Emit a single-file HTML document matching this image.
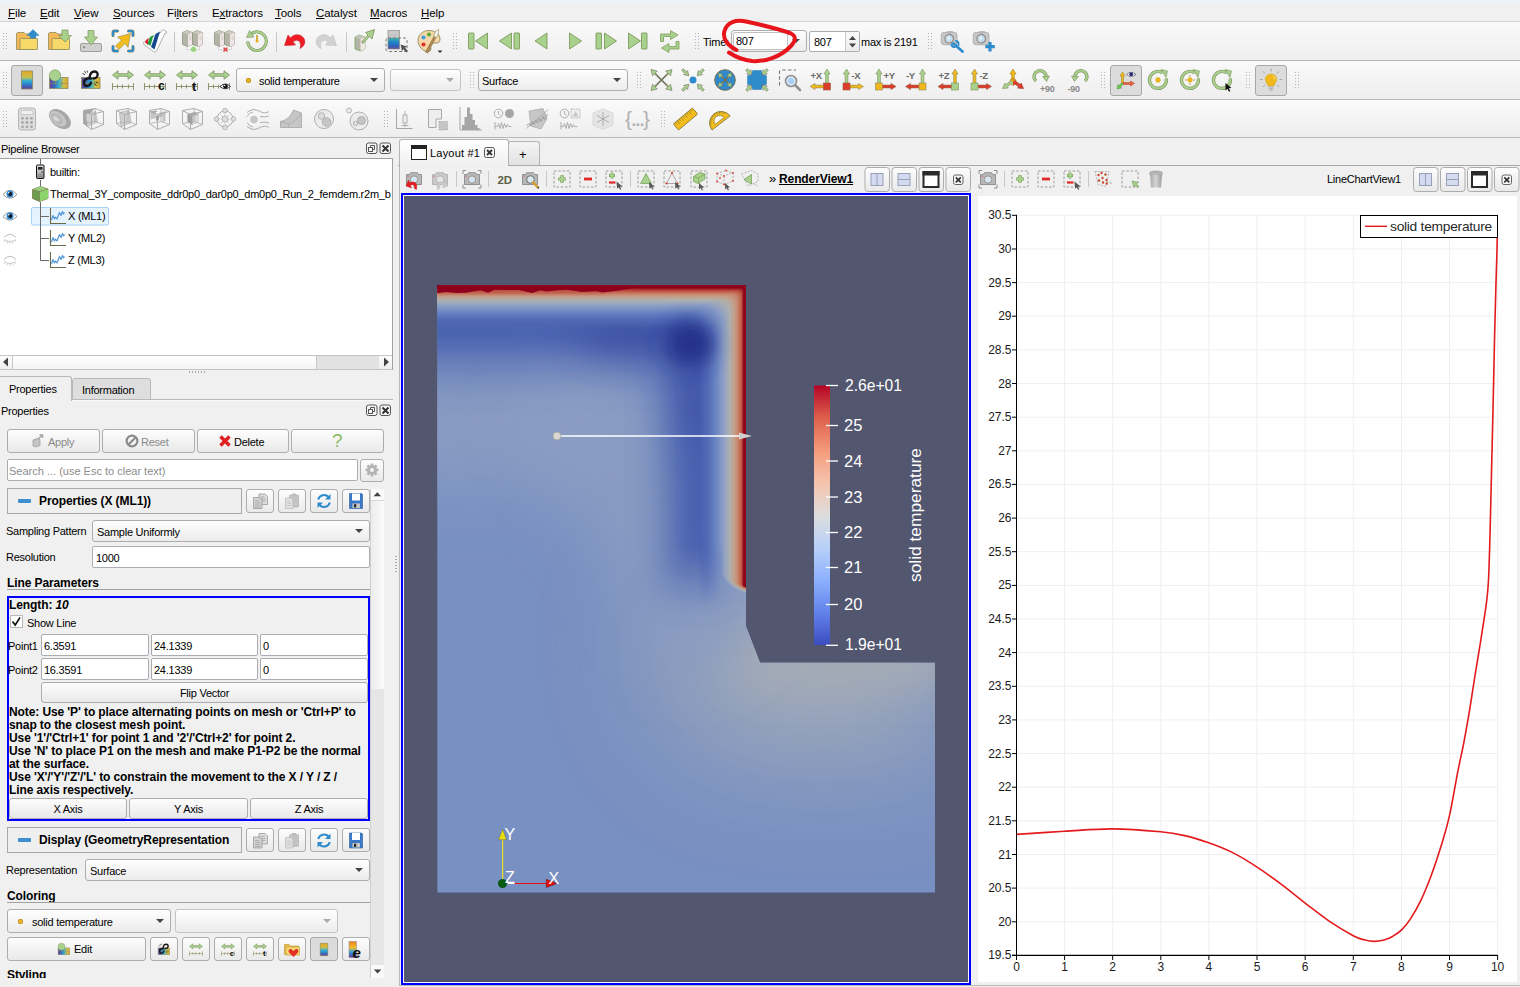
<!DOCTYPE html>
<html><head><meta charset="utf-8"><title>ParaView</title>
<style>
*{box-sizing:border-box;margin:0;padding:0}
html,body{width:1520px;height:987px;overflow:hidden;background:#f0f0f0}
body{position:relative;font-family:"Liberation Sans",sans-serif;font-size:11px;letter-spacing:-0.25px;color:#000}
.a{position:absolute;white-space:nowrap}
.t{position:absolute;white-space:nowrap;line-height:13px;height:13px}
.b{font-weight:bold}
.tb{position:absolute;left:0;width:1520px;background:linear-gradient(#fafafa,#eeeeee);border-bottom:1px solid #b8b8b8}
.hd{position:absolute;margin-left:-1px;width:6px;height:18px;background-image:radial-gradient(circle,#b4b4b4 0.6px,transparent 0.9px);background-size:3px 3px;}
.btn{position:absolute;border:1px solid #adadad;border-radius:3px;background:linear-gradient(#fdfdfd,#e9e9e9);text-align:center}
.btnp{position:absolute;border:1px solid #a8a8a8;border-radius:3px;background:#dcdcdc}
.inp{position:absolute;border:1px solid #abadb3;border-radius:2px;background:#fff;padding-left:3px}
.cmb{position:absolute;border:1px solid #adadad;border-radius:3px;background:linear-gradient(#fefefe,#ececec);padding-left:4px}
.cmb:after{content:"";position:absolute;right:6px;top:50%;margin-top:-2px;border:4px solid transparent;border-top:4px solid #444;border-bottom:none}
.cmb.dis:after{border-top-color:#aaa}
.ic{position:absolute;width:24px;height:24px;overflow:visible}
svg{overflow:visible}
</style></head><body>
<!-- top strip + menubar -->
<div class="a" style="left:0;top:0;width:1520px;height:4px;background:linear-gradient(#eef3f8 75%,#eff1f3)"></div>
<div class="a" style="left:0;top:4px;width:1520px;height:18px;background:#f0f0f0;border-bottom:1px solid #d4d4d4"></div>
<div class="t" style="left:8px;top:7px;font-size:11.5px;letter-spacing:-0.1px"><u>F</u>ile</div>
<div class="t" style="left:40px;top:7px;font-size:11.5px;letter-spacing:-0.1px"><u>E</u>dit</div>
<div class="t" style="left:74px;top:7px;font-size:11.5px;letter-spacing:-0.1px"><u>V</u>iew</div>
<div class="t" style="left:113px;top:7px;font-size:11.5px;letter-spacing:-0.1px"><u>S</u>ources</div>
<div class="t" style="left:167px;top:7px;font-size:11.5px;letter-spacing:-0.1px">Fi<u>l</u>ters</div>
<div class="t" style="left:212px;top:7px;font-size:11.5px;letter-spacing:-0.1px">E<u>x</u>tractors</div>
<div class="t" style="left:275px;top:7px;font-size:11.5px;letter-spacing:-0.1px"><u>T</u>ools</div>
<div class="t" style="left:316px;top:7px;font-size:11.5px;letter-spacing:-0.1px"><u>C</u>atalyst</div>
<div class="t" style="left:370px;top:7px;font-size:11.5px;letter-spacing:-0.1px"><u>M</u>acros</div>
<div class="t" style="left:421px;top:7px;font-size:11.5px;letter-spacing:-0.1px"><u>H</u>elp</div>
<!-- toolbars -->
<div class="tb" style="top:22px;height:39px"></div>
<div class="tb" style="top:61px;height:39px"></div>
<div class="tb" style="top:100px;height:38px"></div>
<!-- toolbar handles -->
<div class="hd" style="left:3px;top:32px"></div><div class="hd" style="left:453px;top:32px"></div><div class="hd" style="left:695px;top:32px"></div><div class="hd" style="left:928px;top:32px"></div>
<div class="hd" style="left:3px;top:71px"></div><div class="hd" style="left:470px;top:71px"></div><div class="hd" style="left:637px;top:71px"></div><div class="hd" style="left:1101px;top:71px"></div><div class="hd" style="left:1246px;top:71px"></div><div class="hd" style="left:1295px;top:71px"></div>
<div class="hd" style="left:3px;top:110px"></div><div class="hd" style="left:384px;top:110px"></div><div class="hd" style="left:661px;top:110px"></div>
<!-- separators -->
<div class="a" style="left:174px;top:32px;width:1px;height:20px;background:#c8c8c8"></div>
<div class="a" style="left:276px;top:32px;width:1px;height:20px;background:#c8c8c8"></div>
<div class="a" style="left:346px;top:32px;width:1px;height:20px;background:#c8c8c8"></div>
<!-- pressed buttons -->
<div class="btnp" style="left:11px;top:65px;width:32px;height:31px"></div>
<div class="btnp" style="left:1110px;top:65px;width:32px;height:31px"></div>
<div class="btnp" style="left:1255px;top:65px;width:32px;height:31px"></div>
<!-- time controls -->
<div class="t" style="left:703px;top:36px">Time:</div>
<div class="cmb" style="left:731px;top:30px;width:76px;height:22px;padding:0"><div class="a" style="left:1px;top:1px;width:55px;height:18px;background:#fff;border:1px solid #c0c0c0;border-radius:2px;line-height:16px;padding-left:2px">807</div></div>
<div class="inp" style="left:809px;top:31px;width:51px;height:21px;line-height:20px;padding-left:4px">807</div>
<div class="a" style="left:845px;top:32px;width:14px;height:19px;border-left:1px solid #c8c8c8;background:linear-gradient(#fafafa,#ececec)"></div>
<svg class="a" style="left:846px;top:32px" width="13" height="19"><path d="M3 8l3.500-4 3.500 4zM3 11.500l3.500 4 3.500-4z" fill="#444"/></svg>
<div class="t" style="left:861px;top:36px">max is 2191</div>
<!-- row2 combos -->
<div class="cmb" style="left:236px;top:68px;width:149px;height:24px;line-height:24px;padding-left:22px">solid temperature</div>
<div class="a" style="left:246px;top:78px;width:5px;height:5px;border-radius:1.5px;background:#f0b428;border:1px solid #c08a18"></div>
<div class="cmb dis" style="left:390px;top:69px;width:71px;height:22px;border-color:#c4c4c4"></div>
<div class="cmb" style="left:478px;top:69px;width:150px;height:22px;line-height:22px;padding-left:3px">Surface</div>
<svg class="a" style="left:0;top:0" width="1520" height="140" viewBox="0 0 1520 140">
<g transform="translate(27,41)"><path d="M-10.500 8.500v-16l1-1h6.500l1.500 1.500h8l0.500 0.500v15z" fill="#f4b955" stroke="#8f8a5a" stroke-width="0.800" stroke-linejoin="round"/><rect x="-7" y="-2.500" width="17.500" height="11" rx="0.500" fill="#f6d968" stroke="#8f8a5a" stroke-width="0.800"/><path d="M6 -11.500l6 6h-3.200v2.500h-5.600v-2.500h-3.200z" fill="#2e8ccc" stroke="#2277b0" stroke-width="0.400"/></g>
<g transform="translate(59,41)"><path d="M-10.500 8.500v-16l1-1h6.500l1.500 1.500h8l0.500 0.500v15z" fill="#f4b955" stroke="#8f8a5a" stroke-width="0.800" stroke-linejoin="round"/><rect x="-7" y="-2.500" width="17.500" height="11" rx="0.500" fill="#f6d968" stroke="#8f8a5a" stroke-width="0.800"/><path d="M3 -11h6v5.500h3.500l-6.500 6.500-6.500-6.500h3.500z" fill="#a9d18e" stroke="#7c8f5c" stroke-width="0.700" stroke-linejoin="round"/></g>
<g transform="translate(91,41)"><rect x="-10.500" y="2.500" width="21" height="8" rx="1.500" fill="#cfd0cf" stroke="#8e8e86" stroke-width="0.800"/><circle cx="-7" cy="6.200" r="1.100" fill="#8e8e86"/><path d="M-3 -10.500h6v6.500h3.500l-6.500 8-6.500-8h3.500z" fill="#a9d18e" stroke="#7c8f5c" stroke-width="0.700" stroke-linejoin="round"/></g>
<g transform="translate(123,41)"><path d="M-10 -5.5V-8.5Q-10 -10 -8.5 -10H-5.5" fill="none" stroke="#8f8a5a" stroke-width="3" stroke-linecap="round"/><path d="M-10 -5.5V-8.5Q-10 -10 -8.5 -10H-5.5" fill="none" stroke="#2e8ccc" stroke-width="2" stroke-linecap="round"/><path d="M-10 5.5V8.5Q-10 10 -8.5 10H-5.5" fill="none" stroke="#8f8a5a" stroke-width="3" stroke-linecap="round"/><path d="M-10 5.5V8.5Q-10 10 -8.5 10H-5.5" fill="none" stroke="#2e8ccc" stroke-width="2" stroke-linecap="round"/><path d="M10 -5.5V-8.5Q10 -10 8.5 -10H5.5" fill="none" stroke="#8f8a5a" stroke-width="3" stroke-linecap="round"/><path d="M10 -5.5V-8.5Q10 -10 8.5 -10H5.5" fill="none" stroke="#2e8ccc" stroke-width="2" stroke-linecap="round"/><path d="M10 5.5V8.5Q10 10 8.5 10H5.5" fill="none" stroke="#8f8a5a" stroke-width="3" stroke-linecap="round"/><path d="M10 5.5V8.5Q10 10 8.5 10H5.5" fill="none" stroke="#2e8ccc" stroke-width="2" stroke-linecap="round"/><path d="M7.500 -7.500l-13 3.500 4 3-6 6 3.500 3.500 6-6 3 4z" fill="#f2bc1c" stroke="#8f8a5a" stroke-width="0.600" stroke-linejoin="round"/></g>
<g transform="translate(155,41)"><path d="M8 -11.500l4 2.500-1 1.500-1-0.500-8.500 18q-1 2-3 0.500l-9.500-7q-1.500-1.500 0.500-3l17-9.500-0.500-0.500z" fill="#fff" stroke="#b0b0b0" stroke-width="1" stroke-linejoin="round"/><path d="M-10 1.500q0.500-3 3.500-4.500l-0.500 7z" fill="#e02030"/><path d="M-5 -4l3.500-2-3 11-3-2.200z" fill="#1f9a3c"/><path d="M0.500 -7l4.500-2.500-5.500 18-3.500-2.600z" fill="#14478f"/></g>
<g transform="translate(193,41)"><path d="M-6.500 5v3.500h13v-3.500" fill="#fff" stroke="#d0d0d0" stroke-width="0.900"/><path d="M-10.5 3.5v-12l4.500-2 5.500 2v12l-4.500 2z" fill="#b4b4a6" stroke="#8a8a7c" stroke-width="0.700" stroke-linejoin="round"/><path d="M-5.0 -6.5l4.500-2v12l-4.500 2z" fill="#f0e6e6"/><path d="M-10.5 -8.5l4.500-2 5.500 2-4.500 2z" fill="#c8c8bc"/><path d="M-3.5 -4h1.800M-3.5 -2h1.800" stroke="#aaa" stroke-width="0.600"/><path d="M-0.5 3.5v-12l4.500-2 5.500 2v12l-4.500 2z" fill="#b4b4a6" stroke="#8a8a7c" stroke-width="0.700" stroke-linejoin="round"/><path d="M5.0 -6.5l4.500-2v12l-4.500 2z" fill="#f0e6e6"/><path d="M-0.5 -8.5l4.500-2 5.500 2-4.500 2z" fill="#c8c8bc"/><path d="M6.5 -4h1.800M6.5 -2h1.800" stroke="#aaa" stroke-width="0.600"/><circle cx="0.500" cy="8.300" r="2.700" fill="#9ed47e"/></g>
<g transform="translate(225,41)"><path d="M-6.500 5v3.500h13v-3.500" fill="#fff" stroke="#d0d0d0" stroke-width="0.900"/><path d="M-10.5 3.5v-12l4.500-2 5.500 2v12l-4.500 2z" fill="#b4b4a6" stroke="#8a8a7c" stroke-width="0.700" stroke-linejoin="round"/><path d="M-5.0 -6.5l4.500-2v12l-4.500 2z" fill="#f0e6e6"/><path d="M-10.5 -8.5l4.500-2 5.500 2-4.500 2z" fill="#c8c8bc"/><path d="M-3.5 -4h1.800M-3.5 -2h1.800" stroke="#aaa" stroke-width="0.600"/><path d="M-0.5 3.5v-12l4.500-2 5.500 2v12l-4.500 2z" fill="#b4b4a6" stroke="#8a8a7c" stroke-width="0.700" stroke-linejoin="round"/><path d="M5.0 -6.5l4.500-2v12l-4.500 2z" fill="#f0e6e6"/><path d="M-0.5 -8.5l4.500-2 5.500 2-4.500 2z" fill="#c8c8bc"/><path d="M6.5 -4h1.800M6.5 -2h1.800" stroke="#aaa" stroke-width="0.600"/><path d="M-1.500 6.500l4 4M2.500 6.500l-4 4" stroke="#e04848" stroke-width="1.700"/></g>
<g transform="translate(257,41)"><path d="M-6.500 -6.500A9.300 9.300 0 1 1 -9.300 0.500" fill="none" stroke="#7c8f5c" stroke-width="3"/><path d="M-6.500 -6.500A9.300 9.300 0 1 1 -9.300 0.500" fill="none" stroke="#a9d18e" stroke-width="1.900"/><path d="M-10.500 -3.500l7.500-0.500-4.500-6.500z" fill="#a9d18e" stroke="#7c8f5c" stroke-width="0.600" stroke-linejoin="round"/><path d="M0 -6v5.500" stroke="#c89a1c" stroke-width="1.600"/><circle cx="0" cy="0" r="1.500" fill="#e8b020"/></g>
<g transform="translate(294,41)"><g transform=""><path d="M-9.500 4.500l3.500-10.500 2.500 3c3.500-4.500 10.500-4.500 13.500 0.500c2 4 0 8-4 10c1.500-4.500 0-7.500-2.500-8c-1.500-0.500-3.500 0.500-4.500 1.500l2.500 3z" fill="#ee1c24" stroke="#c01018" stroke-width="0.500" stroke-linejoin="round"/></g></g>
<g transform="translate(327,41)"><g transform="scale(-1,1)"><path d="M-9.500 4.500l3.500-10.500 2.500 3c3.500-4.500 10.500-4.500 13.500 0.500c2 4 0 8-4 10c1.500-4.500 0-7.500-2.500-8c-1.500-0.500-3.500 0.500-4.500 1.500l2.500 3z" fill="#d2d2d2" stroke="#b8b8b8" stroke-width="0.500" stroke-linejoin="round"/></g></g>
<g transform="translate(364,41)"><path d="M-9 8.0v-12l4.500-2 5.500 2v12l-4.500 2z" fill="#b4b4a6" stroke="#6fa050" stroke-width="0.700" stroke-linejoin="round"/><path d="M-3.5 -2.0l4.500-2v12l-4.500 2z" fill="#f0e6e6"/><path d="M-9 -4.0l4.500-2 5.500 2-4.500 2z" fill="#c8c8bc"/><path d="M-2 0.5h1.800M-2 2.5h1.800" stroke="#aaa" stroke-width="0.600"/><path d="M-2.500 1l6.500-7-2.500-2.500 9-3-2.500 9.500-2.500-2.500-6 6.500z" fill="#a9d18e" stroke="#7c8f5c" stroke-width="0.800" stroke-linejoin="round"/></g>
<g transform="translate(396,41)"><defs><linearGradient id="gbl" x1="0" y1="0" x2="0" y2="1"><stop offset="0" stop-color="#cccccc"/><stop offset="0.380" stop-color="#c4c4c4"/><stop offset="0.420" stop-color="#38b0b0"/><stop offset="0.650" stop-color="#2080c8"/><stop offset="0.850" stop-color="#3060b8"/><stop offset="1" stop-color="#7050a0"/></linearGradient></defs><rect x="-8" y="-10.500" width="11.500" height="18.500" fill="url(#gbl)" stroke="#8a8a80" stroke-width="0.700"/><rect x="-10" y="-3" width="21" height="13.500" rx="2" fill="none" stroke="#777" stroke-width="1" stroke-dasharray="3 2"/><path d="M4.500 3.500l6.500 2-2 1.200 3 3.300-1.500 1.500-3.200-3.200-1.300 2z" fill="#555"/></g>
<g transform="translate(429,41)"><path d="M0 -10.500c-6.500 0-11 4.500-11 10s4.500 11 10 11c2 0 3-1 3-2.500c0-1.500-1-2-1-3.500c0-1.500 1.500-2.500 3.500-2.500h3c2.500 0 3.500-1.500 3.500-4c0-5-5-8.500-11-8.500z" fill="#f6d8a8" stroke="#8f8a5a" stroke-width="0.900"/><circle cx="-5.500" cy="-3.500" r="2.100" fill="#3aa0e0"/><circle cx="0" cy="-6.500" r="2" fill="#58a838"/><circle cx="-5.500" cy="3.500" r="2.100" fill="#e03028"/><path d="M-3.500 11l9-16.500 1.800 1-8.500 16.500z" fill="#b98850" stroke="#7a6840" stroke-width="0.600"/><path d="M5 -4.500c0-3 2-6 4.500-7c0.500 2.500-0.500 6-2.500 8.200z" fill="#fafafa" stroke="#8f8a5a" stroke-width="0.700"/><path d="M8.500 9.500h5l-2.500 2.500z" fill="#333"/></g>
<g transform="translate(478,41)"><rect x="-9.5" y="-8" width="5.500" height="16" rx="0.600" fill="#a9d18e" stroke="#7f9a5c" stroke-width="0.900"/><path d="M9.5 -8l-12 8 12 8z" fill="#a9d18e" stroke="#7f9a5c" stroke-width="0.900" stroke-linejoin="round"/></g>
<g transform="translate(510,41)"><path d="M1.5 -8l-12 8 12 8z" fill="#a9d18e" stroke="#7f9a5c" stroke-width="0.900" stroke-linejoin="round"/><rect x="4" y="-8" width="5.500" height="16" rx="0.600" fill="#a9d18e" stroke="#7f9a5c" stroke-width="0.900"/></g>
<g transform="translate(542,41)"><path d="M5 -8l-12 8 12 8z" fill="#a9d18e" stroke="#7f9a5c" stroke-width="0.900" stroke-linejoin="round"/></g>
<g transform="translate(574,41)"><path d="M-4.5 -8l12 8-12 8z" fill="#a9d18e" stroke="#7f9a5c" stroke-width="0.900" stroke-linejoin="round"/></g>
<g transform="translate(606,41)"><rect x="-10" y="-8" width="5.500" height="16" rx="0.600" fill="#a9d18e" stroke="#7f9a5c" stroke-width="0.900"/><path d="M-1.5 -8l12 8-12 8z" fill="#a9d18e" stroke="#7f9a5c" stroke-width="0.900" stroke-linejoin="round"/></g>
<g transform="translate(638,41)"><path d="M-9.5 -8l12 8-12 8z" fill="#a9d18e" stroke="#7f9a5c" stroke-width="0.900" stroke-linejoin="round"/><rect x="3.5" y="-8" width="5.500" height="16" rx="0.600" fill="#a9d18e" stroke="#7f9a5c" stroke-width="0.900"/></g>
<g transform="translate(670,41)"><path d="M-9.500 0.500v-7.500h10v-3.500l7.500 4.500-7.500 4.500v-3h-7v5z" fill="#a9d18e" stroke="#7f9a5c" stroke-width="0.800" stroke-linejoin="round"/><path d="M9 0.500v7.500h-10v3.500l-7.500-4.500 7.500-4.500v3h7v-5z" fill="#a9d18e" stroke="#7f9a5c" stroke-width="0.800" stroke-linejoin="round"/></g>
<g transform="translate(952,41)"><path d="M-5.500 -8.500l0.800-1.200h5.400l0.800 1.200z" fill="#a8a8a8"/><rect x="-10.700" y="-8.600" width="15.700" height="12.400" rx="2.600" fill="#c8c8c8" stroke="#a4a4a4" stroke-width="0.800"/><circle cx="-2.800" cy="-2.300" r="4.300" fill="#d8d8d8" stroke="#8c8c8c" stroke-width="1.200"/><circle cx="-2.800" cy="-2.300" r="2.700" fill="#bfe0f8"/><circle cx="-3.300" cy="-2.800" r="1.300" fill="#e8f4fc"/><path d="M1.500 2.500l9 8" stroke="#2e8ccc" stroke-width="2.800" stroke-linecap="round"/><path d="M-0.500 3.500q0.500 3 3.500 2.500M4 0q3 0.500 2.500 4" fill="none" stroke="#2e8ccc" stroke-width="1.800" stroke-linecap="round"/></g>
<g transform="translate(984,41)"><path d="M-5.500 -8.500l0.800-1.200h5.400l0.800 1.200z" fill="#a8a8a8"/><rect x="-10.700" y="-8.600" width="15.700" height="12.400" rx="2.600" fill="#c8c8c8" stroke="#a4a4a4" stroke-width="0.800"/><circle cx="-2.800" cy="-2.300" r="4.300" fill="#d8d8d8" stroke="#8c8c8c" stroke-width="1.200"/><circle cx="-2.800" cy="-2.300" r="2.700" fill="#bfe0f8"/><circle cx="-3.300" cy="-2.800" r="1.300" fill="#e8f4fc"/><path d="M6 1v9.500M1.300 5.700h9.500" stroke="#2e8ccc" stroke-width="3.200"/></g>
<g transform="translate(27,80)"><defs><linearGradient id="gvir" x1="0" y1="0" x2="0" y2="1"><stop offset="0" stop-color="#e6a820"/><stop offset="0.350" stop-color="#c8c050"/><stop offset="0.550" stop-color="#30b0d8"/><stop offset="0.800" stop-color="#3070c0"/><stop offset="1" stop-color="#6a3c98"/></linearGradient><linearGradient id="ghor" x1="0" y1="0" x2="1" y2="0"><stop offset="0" stop-color="#6a3c98"/><stop offset="0.300" stop-color="#3070c0"/><stop offset="0.500" stop-color="#30b0d8"/><stop offset="0.750" stop-color="#c8c050"/><stop offset="1" stop-color="#e6a820"/></linearGradient><linearGradient id="ghv" x1="0" y1="0" x2="1" y2="1"><stop offset="0" stop-color="#7a58a8"/><stop offset="0.350" stop-color="#3078c0"/><stop offset="0.550" stop-color="#38b0c8"/><stop offset="0.800" stop-color="#d8b838"/><stop offset="1" stop-color="#e6a020"/></linearGradient></defs><rect x="-5.500" y="-9" width="11" height="18" fill="url(#gvir)" stroke="#8a8a62" stroke-width="0.8"/></g>
<g transform="translate(59,80)"><rect x="-9.500" y="-2.500" width="18.500" height="11" fill="url(#ghor)" stroke="#8a8a62" stroke-width="0.800"/><path d="M-9.500 3.500h18.500M-3.500 1v4.500M3 1v4.500" stroke="#8a8a62" stroke-width="0.700" fill="none" opacity="0.800"/><circle cx="-4" cy="-4.500" r="5.700" fill="#a9d18e" stroke="#7c8f5c" stroke-width="0.600"/></g>
<g transform="translate(91,80)"><rect x="-9.500" y="-2.500" width="18.500" height="11" fill="url(#ghor)" stroke="#8a8a62" stroke-width="0.800"/><path d="M-9.500 3.500h18.500M-3.500 1v4.500M3 1v4.500" stroke="#8a8a62" stroke-width="0.700" fill="none" opacity="0.800"/><path d="M-1.500 -2.500c0.500-3.500 2-6 5-6s3.500 2.500 3 4-2 3-4 3" fill="none" stroke="#151515" stroke-width="2.300" stroke-linecap="round"/><path d="M0 -1.500c-3.500-0.500-6.500 0.500-7 3.500s1.500 4 3 4 3.500-1.500 4-3.500" fill="none" stroke="#151515" stroke-width="2.300" stroke-linecap="round"/><path d="M-8.500 -6.500l2.500 1.200M-6.500 -9l1.300 2.300M-4 -9.500l0.500 2M4.500 2l2.500 0.500M3.500 4l2 1.500" stroke="#151515" stroke-width="0.800"/></g>
<g transform="translate(123,80)"><path d="M-10.500 -5l5.500-4.200v2.900h10v-2.900l5.500 4.200-5.500 4.200v-2.900h-10v2.900z" fill="#a9d18e" stroke="#7c8f5c" stroke-width="0.800" stroke-linejoin="round"/><path d="M-10.500 6.500h21M-10.500 3v7M-5.500 4.500v4M-0.500 4.500v4M5.500 4.500v4M10.500 3v7" fill="none" stroke="#8a8a62" stroke-width="0.900"/></g>
<g transform="translate(155,80)"><path d="M-10.500 -5l5.500-4.200v2.900h10v-2.900l5.500 4.200-5.500 4.200v-2.900h-10v2.900z" fill="#a9d18e" stroke="#7c8f5c" stroke-width="0.800" stroke-linejoin="round"/><path d="M-10.500 6.500h21M-10.500 3v7M-5.500 4.500v4M-0.500 4.500v4M5.500 4.500v4M10.500 3v7" fill="none" stroke="#8a8a62" stroke-width="0.900"/><text x="3" y="10" font-family="Liberation Sans,sans-serif" font-weight="bold" font-size="12px" fill="#111">c</text></g>
<g transform="translate(187,80)"><path d="M-10.500 -5l5.500-4.200v2.900h10v-2.900l5.500 4.200-5.500 4.200v-2.900h-10v2.900z" fill="#a9d18e" stroke="#7c8f5c" stroke-width="0.800" stroke-linejoin="round"/><path d="M-10.500 6.500h21M-10.500 3v7M-5.500 4.500v4M-0.500 4.500v4M5.500 4.500v4M10.500 3v7" fill="none" stroke="#8a8a62" stroke-width="0.900"/><text x="5" y="10.500" font-family="Liberation Sans,sans-serif" font-weight="bold" font-size="13px" fill="#111">t</text></g>
<g transform="translate(219,80)"><path d="M-10.500 -5l5.500-4.200v2.900h10v-2.900l5.500 4.200-5.500 4.200v-2.900h-10v2.900z" fill="#a9d18e" stroke="#7c8f5c" stroke-width="0.800" stroke-linejoin="round"/><path d="M-10.500 6.500h21M-10.500 3v7M-5.500 4.500v4M-0.500 4.500v4M5.500 4.500v4M10.500 3v7" fill="none" stroke="#8a8a62" stroke-width="0.900"/><path d="M1 6.500q5-5 10.500 0q-5.500 4.500-10.500 0z" fill="#fff" stroke="#222" stroke-width="0.900"/><circle cx="6.500" cy="6.300" r="2.300" fill="#111"/><circle cx="5.700" cy="5.500" r="0.700" fill="#fff"/></g>
<g transform="translate(661.5,80)"><path d="M-7 -7l14 14M7 -7l-14 14" stroke="#6e6e58" stroke-width="1.700"/><path d="M-4.1 -4.9L-6.2 -7.0L-4.2 -9.0L-10.5 -10.5L-9.0 -4.2L-7.0 -6.2L-4.9 -4.1z" fill="#a9d18e" stroke="#6e6e58" stroke-width="0.600" stroke-linejoin="round"/><path d="M-4.9 4.1L-7.0 6.2L-9.0 4.2L-10.5 10.5L-4.2 9.0L-6.2 7.0L-4.1 4.9z" fill="#a9d18e" stroke="#6e6e58" stroke-width="0.600" stroke-linejoin="round"/><path d="M4.9 -4.1L7.0 -6.2L9.0 -4.2L10.5 -10.5L4.2 -9.0L6.2 -7.0L4.1 -4.9z" fill="#a9d18e" stroke="#6e6e58" stroke-width="0.600" stroke-linejoin="round"/><path d="M4.1 4.9L6.2 7.0L4.2 9.0L10.5 10.5L9.0 4.2L7.0 6.2L4.9 4.1z" fill="#a9d18e" stroke="#6e6e58" stroke-width="0.600" stroke-linejoin="round"/></g>
<g transform="translate(693,80)"><path d="M-11.3 -9.7L-8.3 -6.6L-9.5 -5.4L-4.2 -4.2L-5.4 -9.5L-6.6 -8.3L-9.7 -11.3z" fill="#a9d18e" stroke="#6e6e58" stroke-width="0.600" stroke-linejoin="round"/><path d="M-9.7 11.3L-6.6 8.3L-5.4 9.5L-4.2 4.2L-9.5 5.4L-8.3 6.6L-11.3 9.7z" fill="#a9d18e" stroke="#6e6e58" stroke-width="0.600" stroke-linejoin="round"/><path d="M9.7 -11.3L6.6 -8.3L5.4 -9.5L4.2 -4.2L9.5 -5.4L8.3 -6.6L11.3 -9.7z" fill="#a9d18e" stroke="#6e6e58" stroke-width="0.600" stroke-linejoin="round"/><path d="M11.3 9.7L8.3 6.6L9.5 5.4L4.2 4.2L5.4 9.5L6.6 8.3L9.7 11.3z" fill="#a9d18e" stroke="#6e6e58" stroke-width="0.600" stroke-linejoin="round"/><circle cx="0" cy="0" r="3.500" fill="#2e8ccc"/></g>
<g transform="translate(725,80)"><circle cx="0" cy="0" r="10.300" fill="#2e8ccc" stroke="#6e6e58" stroke-width="1"/><path d="M-4 -4l8 8M4 -4l-8 8" stroke="#6e6e58" stroke-width="1.500"/><path d="M-2.1 -2.9L-3.5 -4.2L-2.0 -5.8L-7.0 -7.0L-5.8 -2.0L-4.2 -3.5L-2.9 -2.1z" fill="#a9d18e" stroke="#6e6e58" stroke-width="0.600" stroke-linejoin="round"/><path d="M-2.9 2.1L-4.2 3.5L-5.8 2.0L-7.0 7.0L-2.0 5.8L-3.5 4.2L-2.1 2.9z" fill="#a9d18e" stroke="#6e6e58" stroke-width="0.600" stroke-linejoin="round"/><path d="M2.9 -2.1L4.2 -3.5L5.8 -2.0L7.0 -7.0L2.0 -5.8L3.5 -4.2L2.1 -2.9z" fill="#a9d18e" stroke="#6e6e58" stroke-width="0.600" stroke-linejoin="round"/><path d="M2.1 2.9L3.5 4.2L2.0 5.8L7.0 7.0L5.8 2.0L4.2 3.5L2.9 2.1z" fill="#a9d18e" stroke="#6e6e58" stroke-width="0.600" stroke-linejoin="round"/></g>
<g transform="translate(757,80)"><path d="M-4.500 -9.500h9q0 5 5 5v9q-5 0-5 5h-9q0-5-5-5v-9q5 0 5-5z" fill="#2e8ccc" stroke="#2a7ab4" stroke-width="0.500"/><path d="M-11.3 -9.7L-9.1 -7.4L-10.3 -6.2L-5.0 -5.0L-6.2 -10.3L-7.4 -9.1L-9.7 -11.3z" fill="#a9d18e" stroke="#6e6e58" stroke-width="0.600" stroke-linejoin="round"/><path d="M-9.7 11.3L-7.4 9.1L-6.2 10.3L-5.0 5.0L-10.3 6.2L-9.1 7.4L-11.3 9.7z" fill="#a9d18e" stroke="#6e6e58" stroke-width="0.600" stroke-linejoin="round"/><path d="M9.7 -11.3L7.4 -9.1L6.2 -10.3L5.0 -5.0L10.3 -6.2L9.1 -7.4L11.3 -9.7z" fill="#a9d18e" stroke="#6e6e58" stroke-width="0.600" stroke-linejoin="round"/><path d="M11.3 9.7L9.1 7.4L10.3 6.2L5.0 5.0L6.2 10.3L7.4 9.1L9.7 11.3z" fill="#a9d18e" stroke="#6e6e58" stroke-width="0.600" stroke-linejoin="round"/></g>
<g transform="translate(789,80)"><path d="M-9.500 5.500v-13.500q0-2 2-2h14.500" fill="none" stroke="#777" stroke-width="1.100" stroke-dasharray="3.500 2.200"/><circle cx="2" cy="1" r="5.500" fill="#d4e6f6" stroke="#909090" stroke-width="1.600"/><circle cx="2" cy="1" r="3" fill="#a8d0f4"/><path d="M6.500 5.500l4.500 4.500" stroke="#909090" stroke-width="2.600" stroke-linecap="round"/></g>
<g transform="translate(821,80)"><path d="M7.4 4.0L7.4 -6.0L9.1 -6.0L6.0 -11.0L2.9 -6.0L4.6 -6.0L4.6 4.0z" fill="#a9d18e" stroke="#7c8f5c" stroke-width="0.600" stroke-linejoin="round"/><path d="M6.0 5.1L-6.0 5.1L-6.0 3.4L-11.0 6.5L-6.0 9.6L-6.0 7.9L6.0 7.9z" fill="#f0b81c" stroke="#8f8a5a" stroke-width="0.600" stroke-linejoin="round"/><rect x="2.5" y="3" width="7" height="7" fill="#dc3c2c" stroke="#9a5a40" stroke-width="0.600"/><text x="-10.5" y="-1.500" font-family="Liberation Sans,sans-serif" font-size="9.500px" fill="#6a6a6a" font-weight="bold" letter-spacing="-0.3">+X</text></g>
<g transform="translate(852.5,80)"><path d="M-4.6 4.0L-4.6 -6.0L-2.9 -6.0L-6.0 -11.0L-9.1 -6.0L-7.4 -6.0L-7.4 4.0z" fill="#a9d18e" stroke="#7c8f5c" stroke-width="0.600" stroke-linejoin="round"/><path d="M-6.0 7.9L6.0 7.9L6.0 9.6L11.0 6.5L6.0 3.4L6.0 5.1L-6.0 5.1z" fill="#f0b81c" stroke="#8f8a5a" stroke-width="0.600" stroke-linejoin="round"/><rect x="-9.5" y="3" width="7" height="7" fill="#dc3c2c" stroke="#9a5a40" stroke-width="0.600"/><text x="-1" y="-1.500" font-family="Liberation Sans,sans-serif" font-size="9.500px" fill="#6a6a6a" font-weight="bold" letter-spacing="-0.3">-X</text></g>
<g transform="translate(885,80)"><path d="M-4.6 4.0L-4.6 -6.0L-2.9 -6.0L-6.0 -11.0L-9.1 -6.0L-7.4 -6.0L-7.4 4.0z" fill="#a9d18e" stroke="#7c8f5c" stroke-width="0.600" stroke-linejoin="round"/><path d="M-6.0 7.9L6.0 7.9L6.0 9.6L11.0 6.5L6.0 3.4L6.0 5.1L-6.0 5.1z" fill="#dc3c2c" stroke="#9a5a40" stroke-width="0.600" stroke-linejoin="round"/><rect x="-9.5" y="3" width="7" height="7" fill="#f0b81c" stroke="#8f8a5a" stroke-width="0.600"/><text x="-1.5" y="-1.500" font-family="Liberation Sans,sans-serif" font-size="9.500px" fill="#6a6a6a" font-weight="bold" letter-spacing="-0.3">+Y</text></g>
<g transform="translate(916.5,80)"><path d="M7.4 4.0L7.4 -6.0L9.1 -6.0L6.0 -11.0L2.9 -6.0L4.6 -6.0L4.6 4.0z" fill="#a9d18e" stroke="#7c8f5c" stroke-width="0.600" stroke-linejoin="round"/><path d="M6.0 5.1L-6.0 5.1L-6.0 3.4L-11.0 6.5L-6.0 9.6L-6.0 7.9L6.0 7.9z" fill="#dc3c2c" stroke="#9a5a40" stroke-width="0.600" stroke-linejoin="round"/><rect x="2.5" y="3" width="7" height="7" fill="#f0b81c" stroke="#8f8a5a" stroke-width="0.600"/><text x="-10.5" y="-1.500" font-family="Liberation Sans,sans-serif" font-size="9.500px" fill="#6a6a6a" font-weight="bold" letter-spacing="-0.3">-Y</text></g>
<g transform="translate(949,80)"><path d="M7.4 4.0L7.4 -6.0L9.1 -6.0L6.0 -11.0L2.9 -6.0L4.6 -6.0L4.6 4.0z" fill="#f0b81c" stroke="#8f8a5a" stroke-width="0.600" stroke-linejoin="round"/><path d="M6.0 5.1L-6.0 5.1L-6.0 3.4L-11.0 6.5L-6.0 9.6L-6.0 7.9L6.0 7.9z" fill="#dc3c2c" stroke="#9a5a40" stroke-width="0.600" stroke-linejoin="round"/><rect x="2.5" y="3" width="7" height="7" fill="#a9d18e" stroke="#7c8f5c" stroke-width="0.600"/><text x="-10.5" y="-1.500" font-family="Liberation Sans,sans-serif" font-size="9.500px" fill="#6a6a6a" font-weight="bold" letter-spacing="-0.3">+Z</text></g>
<g transform="translate(980.5,80)"><path d="M-4.6 4.0L-4.6 -6.0L-2.9 -6.0L-6.0 -11.0L-9.1 -6.0L-7.4 -6.0L-7.4 4.0z" fill="#f0b81c" stroke="#8f8a5a" stroke-width="0.600" stroke-linejoin="round"/><path d="M-6.0 7.9L6.0 7.9L6.0 9.6L11.0 6.5L6.0 3.4L6.0 5.1L-6.0 5.1z" fill="#dc3c2c" stroke="#9a5a40" stroke-width="0.600" stroke-linejoin="round"/><rect x="-9.5" y="3" width="7" height="7" fill="#a9d18e" stroke="#7c8f5c" stroke-width="0.600"/><text x="-1" y="-1.500" font-family="Liberation Sans,sans-serif" font-size="9.500px" fill="#6a6a6a" font-weight="bold" letter-spacing="-0.3">-Z</text></g>
<g transform="translate(1013,80)"><path d="M1.3 1.0L1.3 -6.0L3.1 -6.0L0.0 -11.0L-3.1 -6.0L-1.3 -6.0L-1.3 1.0z" fill="#f0b81c" stroke="#a88414" stroke-width="0.600" stroke-linejoin="round"/><path d="M-0.8 -0.1L-7.2 4.5L-8.2 3.1L-10.5 8.5L-4.6 8.1L-5.7 6.7L0.8 2.1z" fill="#a9d18e" stroke="#7c8f5c" stroke-width="0.600" stroke-linejoin="round"/><path d="M-0.8 2.1L5.7 6.7L4.6 8.1L10.5 8.5L8.2 3.1L7.2 4.5L0.8 -0.1z" fill="#dc3c2c" stroke="#a02c20" stroke-width="0.600" stroke-linejoin="round"/><path d="M-3 0l3-2 3 2v3.500l-3 2-3-2z" fill="#e8a020" stroke="#a06c10" stroke-width="0.500"/><path d="M0 2v3.500M-3 0l3 2 3-2" fill="none" stroke="#a06c10" stroke-width="0.500"/><path d="M0 2l3-2v3.500l-3 2z" fill="#dc3c2c"/><path d="M0 2l-3-2v3.500l3 2z" fill="#a9d18e"/></g>
<g transform="translate(1043,80)"><g transform=""><path d="M-7 1A6 6 0 1 1 3 -2.500" fill="none" stroke="#7c8f5c" stroke-width="3.200"/><path d="M-7 1A6 6 0 1 1 3 -2.500" fill="none" stroke="#a9d18e" stroke-width="2"/><path d="M-0.500 -3.500l7 -0.500-3 5.500z" fill="#a9d18e" stroke="#7c8f5c" stroke-width="0.600" stroke-linejoin="round"/></g><text x="-3" y="11.500" font-family="Liberation Sans,sans-serif" font-size="9px" font-weight="bold" fill="#8a8a8a" letter-spacing="-0.3">+90</text></g>
<g transform="translate(1078,80)"><g transform="scale(-1,1)"><path d="M-7 1A6 6 0 1 1 3 -2.500" fill="none" stroke="#7c8f5c" stroke-width="3.200"/><path d="M-7 1A6 6 0 1 1 3 -2.500" fill="none" stroke="#a9d18e" stroke-width="2"/><path d="M-0.500 -3.500l7 -0.500-3 5.500z" fill="#a9d18e" stroke="#7c8f5c" stroke-width="0.600" stroke-linejoin="round"/></g><text x="-10.5" y="11.500" font-family="Liberation Sans,sans-serif" font-size="9px" font-weight="bold" fill="#8a8a8a" letter-spacing="-0.3">-90</text></g>
<g transform="translate(1126,80)"><path d="M-2.5 3.5L-2.5 -4.0L-1.0 -4.0L-3.5 -8.0L-6.0 -4.0L-4.5 -4.0L-4.5 3.5z" fill="#f0b81c" stroke="#a8882c" stroke-width="0.600" stroke-linejoin="round"/><path d="M-3.5 4.5L4.5 4.5L4.5 6.0L8.5 3.5L4.5 1.0L4.5 2.5L-3.5 2.5z" fill="#e86040" stroke="#b85030" stroke-width="0.600" stroke-linejoin="round"/><path d="M-4.2 2.8L-6.9 5.5L-7.9 4.4L-9.0 9.0L-4.4 7.9L-5.5 6.9L-2.8 4.2z" fill="#6cc850" stroke="#5a9a48" stroke-width="0.600" stroke-linejoin="round"/><path d="M0.500 -5.500q4.500-4.500 9.500 0q-5 4-9.500 0z" fill="#fff" stroke="#555" stroke-width="0.700"/><circle cx="5.200" cy="-5.700" r="2" fill="#3a3a9a"/><circle cx="5.200" cy="-5.700" r="0.900" fill="#111"/></g>
<g transform="translate(1158,80)"><path d="M4.500 -7.200A8.500 8.500 0 1 0 8.300 -1.500" fill="none" stroke="#7c8f5c" stroke-width="3.300"/><path d="M4.500 -7.200A8.500 8.500 0 1 0 8.300 -1.500" fill="none" stroke="#a9d18e" stroke-width="2.100"/><path d="M3 -10.500l6.500 1.500-1.500 6.500z" fill="#a9d18e" stroke="#7c8f5c" stroke-width="0.600" stroke-linejoin="round"/><circle cx="0" cy="0" r="2.400" fill="#f0b81c" stroke="#c89a14" stroke-width="0.400"/></g>
<g transform="translate(1190,80)"><path d="M4.500 -7.200A8.500 8.500 0 1 0 8.300 -1.500" fill="none" stroke="#7c8f5c" stroke-width="3.300"/><path d="M4.500 -7.200A8.500 8.500 0 1 0 8.300 -1.500" fill="none" stroke="#a9d18e" stroke-width="2.100"/><path d="M3 -10.500l6.500 1.500-1.500 6.500z" fill="#a9d18e" stroke="#7c8f5c" stroke-width="0.600" stroke-linejoin="round"/><circle cx="0" cy="0" r="2.400" fill="#f0b81c" stroke="#c89a14" stroke-width="0.400"/><path d="M0 -5v1.800M0 3.200v1.800M-5 0h1.800M3.200 0h1.800" stroke="#b09030" stroke-width="0.900"/></g>
<g transform="translate(1222,80)"><path d="M4.500 -7.200A8.500 8.500 0 1 0 8.300 -1.500" fill="none" stroke="#7c8f5c" stroke-width="3.300"/><path d="M4.500 -7.200A8.500 8.500 0 1 0 8.300 -1.500" fill="none" stroke="#a9d18e" stroke-width="2.100"/><path d="M3 -10.500l6.500 1.500-1.500 6.500z" fill="#a9d18e" stroke="#7c8f5c" stroke-width="0.600" stroke-linejoin="round"/><path d="M3.500 3l6 5-2.700 0.200 1.500 2.800-1.400 0.700-1.400-2.900-2 1.700z" fill="#111"/></g>
<g transform="translate(1271,80)"><path d="M0 -6c-3.800 0-5.800 2.700-5.800 5.300 0 2.700 2.300 4 2.800 6.700h6c0.500-2.700 2.800-4 2.800-6.700 0-2.600-2-5.300-5.800-5.300z" fill="#f0b81c" stroke="#c89a14" stroke-width="0.400"/><path d="M-2.500 7h5M-2.200 8.700h4.400M-1.300 10.300h2.600" stroke="#aaa" stroke-width="1"/><path d="M1.500 -4.300q2.500 1 2.500 3.500" fill="none" stroke="#fbe8a0" stroke-width="0.900"/><path d="M0 -11.500v2.800M-8 -8.500l2 2M8 -8.500l-2 2M-11 -0.500h2.500M11 -0.500h-2.500M-8 7l2-2M8 7l-2-2" stroke="#8a8a8a" stroke-width="0.700"/></g>
<g transform="translate(27,119)"><rect x="-8.500" y="-11" width="17" height="22" rx="2.500" fill="#dedede" stroke="#b4b4b4" stroke-width="1"/><rect x="-6.300" y="-8.700" width="12.600" height="4.200" rx="2" fill="#f0f0f0" stroke="#b8b8b8" stroke-width="0.700"/><circle cx="-4.5" cy="-0.7" r="1.400" fill="#a6a6a6"/><circle cx="-4.5" cy="3.5" r="1.400" fill="#a6a6a6"/><circle cx="-4.5" cy="7.8" r="1.400" fill="#a6a6a6"/><circle cx="0" cy="-0.7" r="1.400" fill="#a6a6a6"/><circle cx="0" cy="3.5" r="1.400" fill="#a6a6a6"/><circle cx="0" cy="7.8" r="1.400" fill="#a6a6a6"/><circle cx="4.5" cy="-0.7" r="1.400" fill="#a6a6a6"/><circle cx="4.5" cy="3.5" r="1.400" fill="#a6a6a6"/><circle cx="4.5" cy="7.8" r="1.400" fill="#a6a6a6"/></g>
<g transform="translate(60,119)"><ellipse cx="0" cy="0" rx="12.500" ry="8" transform="rotate(40)" fill="#a6a6a6"/><ellipse cx="-1.800" cy="1.200" rx="10" ry="6" transform="rotate(40)" fill="#c6c6c6"/><ellipse cx="-1.800" cy="1.200" rx="10" ry="6" transform="rotate(40)" fill="none" stroke="#b0b0b0" stroke-width="0.500"/><ellipse cx="-2.500" cy="1.800" rx="7" ry="4" transform="rotate(40)" fill="#b6b6b6"/><ellipse cx="-3" cy="2.200" rx="4.500" ry="2.500" transform="rotate(40)" fill="#c6c6c6"/><ellipse cx="-3.300" cy="2.500" rx="2.300" ry="1.200" transform="rotate(40)" fill="#dedede"/></g>
<g transform="translate(92,119)"><path d="M-8.500 -8.500l10.500-1.800-3 4.300-5 1 1.500 12.500-4-3z" fill="#a6a6a6"/><path d="M-6 -5l9.500-2.500 2 10.500-10 4.500z" fill="#d2d2d2" stroke="#a6a6a6" stroke-width="0.500"/><path d="M-8.500 -8.500l11.500-2 8.500 3v13l-12 5-8-6zM-8.500 -8.500l8 4 12-3M-0.500 -4.500v15" fill="none" stroke="#a6a6a6" stroke-width="0.900" stroke-linejoin="round"/><path d="M3 -10.500v13l8.500 3M3 2.500l-11.500 2" fill="none" stroke="#a6a6a6" stroke-width="0.700"/></g>
<g transform="translate(125,119)"><path d="M-5.500 -6.500l9.500-2 2 12-10 4z" fill="#d0d0d0" stroke="#a6a6a6" stroke-width="0.600"/><path d="M-8.500 -8.500l11.500-2 8.500 3v13l-12 5-8-6zM-8.500 -8.500l8 4 12-3M-0.500 -4.500v15" fill="none" stroke="#a6a6a6" stroke-width="0.900" stroke-linejoin="round"/><path d="M3 -10.500v13l8.500 3M3 2.500l-11.500 2" fill="none" stroke="#a6a6a6" stroke-width="0.700"/></g>
<g transform="translate(158,119)"><path d="M-7.500 -7l5.500-1.500v7.500l-5.500 1.500z" fill="#c4c4c4"/><path d="M1 -6l6.500-2v10l-3 1.500v-6l-3.500 1z" fill="#c4c4c4"/><path d="M-7.500 -7l5.500-1.500 1.500 1-5.500 1.500z" fill="#a6a6a6"/><path d="M-2 -3l3-1v5l-3 1z" fill="#a6a6a6"/><path d="M-8.500 -8.500l11.500-2 8.500 3v13l-12 5-8-6zM-8.500 -8.500l8 4 12-3M-0.500 -4.500v15" fill="none" stroke="#a6a6a6" stroke-width="0.900" stroke-linejoin="round"/><path d="M3 -10.500v13l8.500 3M3 2.500l-11.500 2" fill="none" stroke="#a6a6a6" stroke-width="0.700"/></g>
<g transform="translate(191,119)"><path d="M-3.500 -5l7-2 4.500 2v8l-6.500 3-5-3z" fill="#d8d8d8"/><path d="M-3.500 -5l7-2 4.500 2-6.500 2.500z" fill="#b0b0b0"/><path d="M-3.500 -5l5 2.500v8.500l-5-3z" fill="#9c9c9c"/><path d="M-8.500 -8.500l11.500-2 8.500 3v13l-12 5-8-6zM-8.500 -8.500l8 4 12-3M-0.500 -4.500v15" fill="none" stroke="#a6a6a6" stroke-width="0.900" stroke-linejoin="round"/><path d="M3 -10.500v13l8.500 3M3 2.500l-11.500 2" fill="none" stroke="#a6a6a6" stroke-width="0.700"/></g>
<g transform="translate(225,119)"><circle cx="0" cy="0" r="8" fill="none" stroke="#a6a6a6" stroke-width="0.900"/><path d="M-8 0h16M0 -8v16M-5.500 -5.500l11 11M5.500 -5.500l-11 11" stroke="#c6c6c6" stroke-width="0.600"/><circle cx="0" cy="-8.5" r="2.300" fill="#dedede" stroke="#a6a6a6" stroke-width="0.700"/><circle cx="0" cy="8.5" r="2.300" fill="#dedede" stroke="#a6a6a6" stroke-width="0.700"/><circle cx="-8.5" cy="0" r="2.300" fill="#dedede" stroke="#a6a6a6" stroke-width="0.700"/><circle cx="8.5" cy="0" r="2.300" fill="#dedede" stroke="#a6a6a6" stroke-width="0.700"/><circle cx="0" cy="0" r="3" fill="#dedede" stroke="#a6a6a6" stroke-width="0.700"/></g>
<g transform="translate(258,119)"><circle cx="-4" cy="0.500" r="3.800" fill="#c6c6c6"/><path d="M-11 -6.500q6-5 12-1.500t10 0.500M-11 7.500q6 5 12 1.500t10-0.500M2 -2.500q4 1 9-0.500M2 3.500q4-1 9 0.500M-11 -2.500q2-4 6-4.500M-11 3.500q2 4 6 4.500" fill="none" stroke="#a6a6a6" stroke-width="0.900"/></g>
<g transform="translate(291,119)"><path d="M-10.500 8.500v-6q9-1.500 13-11.500l8 3v14.500z" fill="#c6c6c6" stroke="#a6a6a6" stroke-width="0.800" stroke-linejoin="round"/><path d="M-10.500 2.500l8 2.500q7-2 13-11M-2.500 5v3.500" fill="none" stroke="#a6a6a6" stroke-width="0.700"/></g>
<g transform="translate(324,119)"><circle cx="0" cy="0" r="9.500" fill="#ececec" stroke="#a6a6a6" stroke-width="0.900"/><circle cx="-2.500" cy="-3" r="3.300" fill="#dedede" stroke="#a6a6a6" stroke-width="0.800"/><circle cx="2.500" cy="3" r="4.300" fill="#c6c6c6" stroke="#a6a6a6" stroke-width="0.800"/></g>
<g transform="translate(357,119)"><circle cx="2" cy="2" r="9" fill="#ececec" stroke="#a6a6a6" stroke-width="0.900"/><circle cx="-8" cy="-8.500" r="2.500" fill="#ececec" stroke="#a6a6a6" stroke-width="0.800"/><circle cx="-1.500" cy="4.500" r="2.200" fill="#dedede" stroke="#a6a6a6" stroke-width="0.800"/><circle cx="4.500" cy="1.500" r="4" fill="#c6c6c6" stroke="#a6a6a6" stroke-width="0.800"/></g>
<g transform="translate(405,119)"><path d="M-8.500 -10v19.500h16" fill="none" stroke="#a6a6a6" stroke-width="1"/><path d="M0 -8v4M0 4v4M-3.500 6.500h7" fill="none" stroke="#a6a6a6" stroke-width="0.900"/><rect x="-2" y="-4" width="4" height="8" fill="#eee" stroke="#a6a6a6" stroke-width="0.900"/></g>
<g transform="translate(438,119)"><path d="M-9.500 -9.500h13v9.500h-5.500v8.500h-7.500z" fill="#eee" stroke="#a6a6a6" stroke-width="1"/><rect x="1" y="2.500" width="8.500" height="8.500" fill="#c6c6c6" stroke="#a6a6a6" stroke-width="0.800" stroke-dasharray="1.500 1"/></g>
<g transform="translate(471,119)"><path d="M-11 -12v23h22" fill="none" stroke="#a6a6a6" stroke-width="1"/><path d="M-9 11v-5h2.500v-8h2.500v-9.500h3v6.500h2.500v6h2.500v5h2.500v3h2v2z" fill="#a6a6a6"/></g>
<g transform="translate(504.5,119)"><circle cx="-6" cy="-5.500" r="4.300" fill="#f4f4f4" stroke="#a6a6a6" stroke-width="0.900"/><path d="M-6 -8v2.800l2 1.500" fill="none" stroke="#a6a6a6" stroke-width="0.900"/><circle cx="5" cy="-5.500" r="4.500" fill="#a6a6a6"/><path d="M-9.500 3v7.500M-9.500 7.500h2.500l1-3 1.500 5 1.500-6 1.500 6 1.500-5 1.500 4 1.500-3 1 2h3" fill="none" stroke="#a6a6a6" stroke-width="0.900"/></g>
<g transform="translate(537.5,119)"><path d="M-8.500 -8l14-2.500 4 10-6 10.500-10-3z" fill="#c6c6c6" stroke="#a6a6a6" stroke-width="0.700"/><path d="M-11 6.500l3-2 1 2.500 2-4.500 1.500 3 2-4.500 1.500 3 2-4.500 1.500 3 2-5 1.500 3 3-5.500" fill="none" stroke="#999" stroke-width="0.900"/><path d="M-11 9.500l22-19" stroke="#999" stroke-width="0.700"/></g>
<g transform="translate(570.5,119)"><circle cx="-6" cy="-5.500" r="4.300" fill="#f4f4f4" stroke="#a6a6a6" stroke-width="0.900"/><path d="M-6 -8v2.800l2 1.500" fill="none" stroke="#a6a6a6" stroke-width="0.900"/><rect x="0.500" y="-10" width="9" height="9" fill="#eee" stroke="#a6a6a6" stroke-width="0.800" stroke-dasharray="1.500 1"/><path d="M5 -8l-3 5.500h6z" fill="#c6c6c6"/><path d="M-9.500 3v7.500M-9.500 7.500h2.500l1-3 1.500 5 1.500-6 1.500 6 1.500-5 1.500 4 1.500-3 1 2h3" fill="none" stroke="#a6a6a6" stroke-width="0.900"/></g>
<g transform="translate(603,119)"><path d="M-10 -6l10-4 10 4v12l-10 4.500-10-4.500z" fill="#e4e4e4" stroke="#d4d4d4" stroke-width="0.800"/><path d="M0 -7v14M-6 -3.500l12 7M6 -3.500l-12 7" stroke="#a6a6a6" stroke-width="0.900"/></g>
<g transform="translate(637.5,119)"><g font-family="Liberation Sans,sans-serif" font-size="21px" fill="#b0b0b0"><text x="-12.500" y="7">{</text><text x="5.500" y="7">}</text><text x="-6" y="6.500" font-size="17px" font-weight="bold" letter-spacing="-0.600">...</text></g></g>
<g transform="translate(685.5,119)"><g transform="rotate(-40)"><rect x="-12.500" y="-4" width="25" height="8" rx="0.800" fill="#f2bc1c" stroke="#8f7f3a" stroke-width="0.900"/><path d="M-10 -4v2.500M-7.500 -4v4M-5 -4v2.500M-2.500 -4v4M0 -4v2.500M2.500 -4v4M5 -4v2.500M7.500 -4v4M10 -4v2.500" stroke="#8f7f3a" stroke-width="0.700"/></g></g>
<g transform="translate(718,119)"><g transform="rotate(-38)"><path d="M-11.500 5a11.500 11.500 0 0 1 23 0z" fill="#f2bc1c" stroke="#8f7f3a" stroke-width="0.900" stroke-linejoin="round"/><path d="M-5.500 2.500a5.500 5.500 0 0 1 11 0z" fill="#f8f8f8" stroke="#8f7f3a" stroke-width="0.700"/><path d="M0 -6.500v2.500M-5.700 -4.900l1.500 1.700M5.700 -4.900l-1.500 1.700M-9.500 -1.500l2 1M9.500 -1.500l-2 1M-3 -6l0.700 2M3 -6l-0.700 2M-8 -3.500l1.800 1.300M8 -3.500l-1.800 1.300" stroke="#8f7f3a" stroke-width="0.700"/></g></g>
</svg>
<!-- red annotation -->
<svg class="a" style="left:700px;top:10px" width="120" height="60" viewBox="700 10 120 60"><path d="M736.500 50C728 46 722 38 724.500 31C727 22 736 19.500 746 21.500C760 24.500 778 29 790 33C797 36 796 41 790 47C780 57 765 62 752 61C742 60 735 56.500 729 52.500" fill="none" stroke="#e8141c" stroke-width="4" stroke-linecap="round"/></svg>
<!-- Pipeline browser -->
<div class="t" style="left:1px;top:143px">Pipeline Browser</div>
<svg class="a" style="left:365px;top:142px" width="27" height="13" viewBox="0 0 27 13"><g fill="none" stroke="#555" stroke-width="1"><rect x="1.5" y="1" width="10.5" height="10.5" rx="2" fill="#f6f6f6"/><rect x="15" y="1" width="10.5" height="10.5" rx="2" fill="#f6f6f6"/><rect x="3.5" y="5.5" width="4" height="4"/><path d="M5.5 5.5V3.5H9.5V7.5H7.5"/></g><path d="M17.5 3.5l6 6M23.5 3.5l-6 6" stroke="#333" stroke-width="2"/></svg>
<div class="a" style="left:0;top:158px;width:393px;height:212px;background:#fff;border:1px solid #a0a0a0;border-left:none"></div>
<!-- tree lines -->
<svg class="a" style="left:0;top:159px" width="392" height="196" viewBox="0 159 392 196">
<rect x="31.500" y="207.500" width="77" height="17.500" rx="1.500" fill="#e5f3ff" stroke="#a4d2f8"/>
<g stroke="#6a6a6a" stroke-width="1" fill="none"><path d="M40.500 159V164.500M40.500 180V186M40.500 202V260.500H49M40.500 216.500H49M40.500 238.500H49"/></g>
<!-- server icon -->
<defs><linearGradient id="gsrv" x1="0" y1="0" x2="0" y2="1"><stop offset="0" stop-color="#e8e8e8"/><stop offset="1" stop-color="#8c8c8c"/></linearGradient></defs>
<rect x="36.500" y="165" width="7.500" height="13.500" rx="0.800" fill="url(#gsrv)" stroke="#111" stroke-width="1"/><rect x="38" y="167" width="4.500" height="2.600" fill="#222"/><rect x="41.500" y="171.500" width="1.200" height="1.200" fill="#222"/><path d="M38 174.500h4.500M38 176.300h4.500" stroke="#777" stroke-width="0.600"/>
<!-- cube icon -->
<path d="M32.500 189.500l8-3 7.500 2.500v9.500l-8.500 3-7-3z" fill="#6c9c50" stroke="#7a7a50" stroke-width="0.800" stroke-linejoin="round"/><path d="M39.500 191.500l8.500-2.500v9.500l-8.500 3z" fill="#8ed46c"/><path d="M32.500 189.500l8-3 7.500 2.500-8.500 2.500z" fill="#9cd484" opacity="0.900"/><path d="M32.500 189.500l7 2 8.500-2.500M39.500 191.500v10" fill="none" stroke="#7a7a50" stroke-width="0.600"/>
<!-- chart icons -->
<g id="lc" fill="none"><path d="M50.500 208V223.500H66" stroke="#6a6a48" stroke-width="1.100"/><path d="M51.500 220l1.500-4.500 1.500 3.500 1-2 1.500 2 2.500-6.500 1.500 3 1.500-4 1 2.500 1-1.500" stroke="#4a90d9" stroke-width="1.100" stroke-linejoin="round"/></g>
<use href="#lc" y="22"/><use href="#lc" y="44"/>
<!-- eyes -->
<g id="eye"><path d="M3 194.500Q10 186 17 194.500Q10 202 3 194.500Z" fill="#fff" stroke="#8a8a8a" stroke-width="0.900"/><circle cx="10" cy="194" r="3.500" fill="#2e8ad8"/><circle cx="10.300" cy="194" r="1.900" fill="#111"/><circle cx="8.800" cy="192.700" r="0.800" fill="#fff"/></g>
<use href="#eye" y="22"/>
<g id="eyec" fill="none" stroke="#b4b4b4" stroke-width="0.900"><path d="M4 237.500Q10 231 16 237.500"/><path d="M4.500 239.500Q10 243.500 15.500 239.500M5 240l-0.800 1.800M7.500 241.300l-0.500 2M10 241.800v2M12.500 241.300l0.500 2M15 240l0.800 1.800" stroke-width="0.700"/></g>
<use href="#eyec" y="22"/>
</svg>
<div class="t" style="left:50px;top:166px">builtin:</div>
<div class="t" style="left:50px;top:188px;width:342px;overflow:hidden">Thermal_3Y_composite_ddr0p0_dar0p0_dm0p0_Run_2_femdem.r2m_b</div>
<div class="t" style="left:68px;top:210px">X (ML1)</div>
<div class="t" style="left:68px;top:232px">Y (ML2)</div>
<div class="t" style="left:68px;top:254px">Z (ML3)</div>
<!-- hscroll -->
<div class="a" style="left:0;top:355px;width:392px;height:15px;background:linear-gradient(#fdfdfd,#eeeeee);border-top:1px solid #c4c4c4;border-bottom:1px solid #c4c4c4"></div>
<div class="a" style="left:12px;top:356px;width:305px;height:13px;background:linear-gradient(#ffffff,#f4f4f4);border-left:1px solid #c8c8c8;border-right:1px solid #c8c8c8"></div>
<div class="a" style="left:317px;top:356px;width:62px;height:13px;background:#e2e2e2"></div>
<svg class="a" style="left:0;top:355px" width="392" height="14"><path d="M3 7l5-4.500v9zM389 7l-5-4.500v9z" fill="#444"/></svg>
<!-- splitter dots -->
<div class="a" style="left:188px;top:371px;width:18px;height:2px;background-image:radial-gradient(circle,#aaa 0.6px,transparent 0.9px);background-size:3px 2px"></div>
<!-- tabs -->
<div class="a" style="left:0;top:399px;width:393px;height:1px;background:#b8b8b8"></div><div class="a" style="left:0;top:400px;width:393px;height:1px;background:#fafafa"></div>
<div class="a" style="left:72px;top:378px;width:79px;height:22px;background:#dedede;border:1px solid #b8b8b8;border-radius:3px 3px 0 0"></div>
<div class="a" style="left:0;top:376px;width:72px;height:25px;background:#f0f0f0;border:1px solid #b8b8b8;border-left:none;border-bottom:none;border-radius:0 3px 0 0"></div>
<div class="t" style="left:9px;top:383px">Properties</div>
<div class="t" style="left:82px;top:384px">Information</div>
<!-- Properties dock -->
<div class="t" style="left:1px;top:405px">Properties</div>
<svg class="a" style="left:365px;top:404px" width="27" height="13" viewBox="0 0 27 13"><g fill="none" stroke="#555" stroke-width="1"><rect x="1.5" y="1" width="10.5" height="10.5" rx="2" fill="#f6f6f6"/><rect x="15" y="1" width="10.5" height="10.5" rx="2" fill="#f6f6f6"/><rect x="3.5" y="5.5" width="4" height="4"/><path d="M5.5 5.5V3.5H9.500V7.500H7.500"/></g><path d="M17.500 3.500l6 6M23.500 3.500l-6 6" stroke="#333" stroke-width="2"/></svg>
<div class="btn" style="left:7px;top:429px;width:93px;height:24px"></div>
<div class="btn" style="left:102px;top:429px;width:93px;height:24px"></div>
<div class="btn" style="left:197px;top:429px;width:92px;height:24px"></div>
<div class="btn" style="left:291px;top:429px;width:93px;height:24px"></div>
<div class="t" style="left:48px;top:436px;color:#8a8a8a">Apply</div>
<div class="t" style="left:141px;top:436px;color:#8a8a8a">Reset</div>
<div class="t" style="left:234px;top:436px">Delete</div>
<div class="t" style="left:332px;top:434px;color:#8aba62;font-size:19px;letter-spacing:0">?</div>
<svg class="a" style="left:31px;top:434px" width="14" height="14" viewBox="0 0 14 14"><path d="M2 6l4-1.500 3 1v6l-4 1.500-3-1z" fill="#c4c4c4" stroke="#9a9a9a" stroke-width="0.7"/><path d="M7 5l4-3.500M8.500 1h3v3" fill="none" stroke="#a8a8a8" stroke-width="1.6"/></svg>
<svg class="a" style="left:125px;top:434px" width="14" height="14" viewBox="0 0 14 14"><circle cx="7" cy="7" r="5.400" fill="none" stroke="#8a8a8a" stroke-width="2.200"/><path d="M3.500 10.500l7-7" stroke="#8a8a8a" stroke-width="2.200"/></svg>
<svg class="a" style="left:219px;top:435px" width="12" height="12" viewBox="0 0 12 12"><path d="M1.500 1.500l9 9M10.500 1.500l-9 9" stroke="#e02020" stroke-width="3.400"/></svg>
<div class="inp" style="left:7px;top:459px;width:351px;height:22px"></div>
<div class="t" style="left:9px;top:465px;color:#8c8c8c;letter-spacing:0px">Search ... (use Esc to clear text)</div>
<div class="btn" style="left:360px;top:459px;width:24px;height:23px"></div>
<svg class="a" style="left:365px;top:463px" width="14" height="14" viewBox="0 0 14 14"><circle cx="7" cy="7" r="3.600" fill="none" stroke="#b4b4b4" stroke-width="3"/><g stroke="#b4b4b4" stroke-width="2.600"><path d="M7 0.500v2.500M7 11v2.500M0.500 7h2.500M11 7h2.500M2.400 2.400l1.800 1.800M9.800 9.800l1.800 1.800M11.600 2.400l-1.800 1.800M4.200 9.800l-1.800 1.800"/></g></svg>
<!-- scroll area -->
<div class="a" style="left:370px;top:489px;width:14px;height:489px;background:#e6e6e6;border-left:1px solid #d0d0d0"></div>
<div class="a" style="left:371px;top:501px;width:13px;height:188px;background:linear-gradient(to right,#ececec,#fcfcfc)"></div>
<div class="a" style="left:395px;top:555px;width:2px;height:18px;background-image:radial-gradient(circle,#aaa 0.6px,transparent 0.9px);background-size:2px 3px"></div>
<div class="a" style="left:371px;top:489px;width:13px;height:12px;background:#fafafa;border-bottom:1px solid #d8d8d8"></div>
<div class="a" style="left:371px;top:965px;width:13px;height:13px;background:#fafafa"></div>
<svg class="a" style="left:371px;top:489px" width="13" height="489"><path d="M2.500 7.300l3.800-4 3.800 4zM2.800 480.500l3.800 4 3.800-4z" fill="#444"/></svg>
<!-- section 1 -->
<div class="a" style="left:7px;top:488px;width:235px;height:26px;border:1px solid #a8a8a8;background:#efefef"></div>
<div class="a" style="left:18px;top:499px;width:13px;height:4px;background:#3f8fd0;border-radius:1px"></div>
<div class="t b" style="left:39px;top:495px;font-size:12px;letter-spacing:-0.1px">Properties (X (ML1))</div>
<div class="btn" style="left:246px;top:489px;width:28px;height:24px"></div>
<div class="btn" style="left:278px;top:489px;width:28px;height:24px"></div>
<div class="btn" style="left:310px;top:489px;width:28px;height:24px"></div>
<div class="btn" style="left:342px;top:489px;width:28px;height:24px"></div>
<div class="t" style="left:6px;top:525px">Sampling Pattern</div>
<div class="cmb" style="left:92px;top:520px;width:278px;height:22px;line-height:22px">Sample Uniformly</div>
<div class="t" style="left:6px;top:551px">Resolution</div>
<div class="inp" style="left:92px;top:546px;width:278px;height:22px;line-height:22px">1000</div>
<div class="t b" style="left:7px;top:577px;font-size:12px;letter-spacing:-0.1px">Line Parameters</div>
<div class="a" style="left:7px;top:589px;width:363px;height:1px;background:#a0a0a0"></div>
<div class="a" style="left:7px;top:596px;width:363px;height:225px;border:2px solid #0000ff"></div>
<div class="t b" style="left:9px;top:599px;font-size:12px;letter-spacing:-0.1px">Length: <i>10</i></div>
<div class="a" style="left:10px;top:615px;width:13px;height:13px;background:#fff;border:1px solid #b8b8b8"></div>
<svg class="a" style="left:11px;top:616px" width="11" height="11"><path d="M1.500 5.500l2.700 3.500 4.800-7.500" fill="none" stroke="#111" stroke-width="1.600"/></svg>
<div class="t" style="left:27px;top:617px">Show Line</div>
<div class="t" style="left:8px;top:640px">Point1</div>
<div class="inp" style="left:41px;top:634px;width:108px;height:22px;line-height:22px;padding-left:2px">6.3591</div>
<div class="inp" style="left:151px;top:634px;width:107px;height:22px;line-height:22px;padding-left:2px">24.1339</div>
<div class="inp" style="left:260px;top:634px;width:108px;height:22px;line-height:22px;padding-left:2px">0</div>
<div class="t" style="left:8px;top:664px">Point2</div>
<div class="inp" style="left:41px;top:658px;width:108px;height:22px;line-height:22px;padding-left:2px">16.3591</div>
<div class="inp" style="left:151px;top:658px;width:107px;height:22px;line-height:22px;padding-left:2px">24.1339</div>
<div class="inp" style="left:260px;top:658px;width:108px;height:22px;line-height:22px;padding-left:2px">0</div>
<div class="btn" style="left:41px;top:682px;width:327px;height:21px;line-height:20px">Flip Vector</div>
<div class="a b" style="left:9px;top:706px;font-size:12px;letter-spacing:-0.1px;line-height:13px;white-space:nowrap">Note: Use 'P' to place alternating points on mesh or 'Ctrl+P' to<br>snap to the closest mesh point.<br>Use '1'/'Ctrl+1' for point 1 and '2'/'Ctrl+2' for point 2.<br>Use 'N' to place P1 on the mesh and make P1-P2 be the normal<br>at the surface.<br>Use 'X'/'Y'/'Z'/'L' to constrain the movement to the X / Y / Z /<br>Line axis respectively.</div>
<div class="btn" style="left:9px;top:798px;width:118px;height:21px;line-height:20px">X Axis</div>
<div class="btn" style="left:129px;top:798px;width:119px;height:21px;line-height:20px">Y Axis</div>
<div class="btn" style="left:250px;top:798px;width:118px;height:21px;line-height:20px">Z Axis</div>
<!-- section 2 -->
<div class="a" style="left:7px;top:827px;width:235px;height:26px;border:1px solid #a8a8a8;background:#efefef"></div>
<div class="a" style="left:18px;top:838px;width:13px;height:4px;background:#3f8fd0;border-radius:1px"></div>
<div class="t b" style="left:39px;top:834px;font-size:12px;letter-spacing:-0.1px">Display (GeometryRepresentation</div>
<div class="btn" style="left:246px;top:828px;width:28px;height:24px"></div>
<div class="btn" style="left:278px;top:828px;width:28px;height:24px"></div>
<div class="btn" style="left:310px;top:828px;width:28px;height:24px"></div>
<div class="btn" style="left:342px;top:828px;width:28px;height:24px"></div>
<div class="t" style="left:6px;top:864px">Representation</div>
<div class="cmb" style="left:85px;top:859px;width:285px;height:22px;line-height:22px">Surface</div>
<div class="t b" style="left:7px;top:890px;font-size:12px;letter-spacing:-0.1px">Coloring</div>
<div class="a" style="left:7px;top:902px;width:363px;height:1px;background:#a0a0a0"></div>
<div class="cmb" style="left:7px;top:909px;width:164px;height:24px;line-height:24px;padding-left:24px">solid temperature</div>
<div class="a" style="left:18px;top:919px;width:5px;height:5px;border-radius:1.5px;background:#f0b428;border:1px solid #c08a18"></div>
<div class="cmb dis" style="left:175px;top:909px;width:163px;height:24px;border-color:#c4c4c4"></div>
<div class="btn" style="left:7px;top:937px;width:139px;height:24px"></div>
<div class="t" style="left:74px;top:943px">Edit</div>
<div class="btn" style="left:150px;top:937px;width:28px;height:24px"></div>
<div class="btn" style="left:182px;top:937px;width:28px;height:24px"></div>
<div class="btn" style="left:214px;top:937px;width:28px;height:24px"></div>
<div class="btn" style="left:246px;top:937px;width:28px;height:24px"></div>
<div class="btn" style="left:278px;top:937px;width:28px;height:24px"></div>
<div class="btnp" style="left:310px;top:937px;width:28px;height:24px"></div>
<div class="btn" style="left:342px;top:937px;width:28px;height:24px"></div>
<svg class="a" style="left:0;top:480px" width="393" height="500" viewBox="0 480 393 500">
<g transform="translate(260,501) scale(1)"><path d="M-1 -7h6l2.500 2.500v8h-8.500z" fill="#dcdcdc" stroke="#909090" stroke-width="0.700"/><path d="M0.500 -4h4M0.500 -2h5M0.500 0h5" stroke="#909090" stroke-width="0.600"/><path d="M-6.500 -3.500h6l2.500 2.500v8.500h-8.500z" fill="#d4d4d4" stroke="#909090" stroke-width="0.700"/><path d="M-5 0h4M-5 2h5.500M-5 4h5.500M-5 6h5.500" stroke="#909090" stroke-width="0.600"/></g>
<g transform="translate(292,501) scale(1)"><rect x="-2.500" y="-6" width="9" height="12" rx="1" fill="#c4c4c4" stroke="#b0b0b0" stroke-width="0.700"/><rect x="0" y="-7.500" width="4" height="2.500" rx="0.800" fill="#bbb"/><path d="M-6.500 -3h5.500l2 2v8.500h-7.500z" fill="#e0e0e0" stroke="#b8b8b8" stroke-width="0.700"/><path d="M-5 0.500h3.500M-5 2.500h4.500M-5 4.500h4.500" stroke="#b8b8b8" stroke-width="0.600"/></g>
<g transform="translate(324,501) scale(1)"><path d="M-5.800 -1.500A6 6 0 0 1 4.500 -4" fill="none" stroke="#2e8ccc" stroke-width="2"/><path d="M5.800 1.500A6 6 0 0 1 -4.500 4" fill="none" stroke="#2e8ccc" stroke-width="2"/><path d="M6.500 -7v5.500h-5.500z" fill="#2e8ccc"/><path d="M-6.500 7v-5.500h5.500z" fill="#2e8ccc"/></g>
<g transform="translate(356,501) scale(1)"><path d="M-6.500 -7.500h12l1 1v14h-13z" fill="#3c78c8" stroke="#2a5a9c" stroke-width="0.600"/><rect x="-4" y="-7.500" width="8" height="7" fill="#fff"/><rect x="-3.500" y="2.500" width="7.500" height="4.500" fill="#c8c8c8"/><rect x="-2" y="3.200" width="2.200" height="3.200" fill="#222"/></g>
<g transform="translate(260,840.5) scale(1)"><path d="M-1 -7h6l2.500 2.500v8h-8.500z" fill="#dcdcdc" stroke="#909090" stroke-width="0.700"/><path d="M0.500 -4h4M0.500 -2h5M0.500 0h5" stroke="#909090" stroke-width="0.600"/><path d="M-6.500 -3.500h6l2.500 2.500v8.500h-8.500z" fill="#d4d4d4" stroke="#909090" stroke-width="0.700"/><path d="M-5 0h4M-5 2h5.500M-5 4h5.500M-5 6h5.500" stroke="#909090" stroke-width="0.600"/></g>
<g transform="translate(292,840.5) scale(1)"><rect x="-2.500" y="-6" width="9" height="12" rx="1" fill="#c4c4c4" stroke="#b0b0b0" stroke-width="0.700"/><rect x="0" y="-7.500" width="4" height="2.500" rx="0.800" fill="#bbb"/><path d="M-6.500 -3h5.500l2 2v8.500h-7.500z" fill="#e0e0e0" stroke="#b8b8b8" stroke-width="0.700"/><path d="M-5 0.500h3.500M-5 2.500h4.500M-5 4.500h4.500" stroke="#b8b8b8" stroke-width="0.600"/></g>
<g transform="translate(324,840.5) scale(1)"><path d="M-5.800 -1.500A6 6 0 0 1 4.500 -4" fill="none" stroke="#2e8ccc" stroke-width="2"/><path d="M5.800 1.500A6 6 0 0 1 -4.500 4" fill="none" stroke="#2e8ccc" stroke-width="2"/><path d="M6.500 -7v5.500h-5.500z" fill="#2e8ccc"/><path d="M-6.500 7v-5.500h5.500z" fill="#2e8ccc"/></g>
<g transform="translate(356,840.5) scale(1)"><path d="M-6.500 -7.500h12l1 1v14h-13z" fill="#3c78c8" stroke="#2a5a9c" stroke-width="0.600"/><rect x="-4" y="-7.500" width="8" height="7" fill="#fff"/><rect x="-3.500" y="2.500" width="7.500" height="4.500" fill="#c8c8c8"/><rect x="-2" y="3.200" width="2.200" height="3.200" fill="#222"/></g>
<g transform="translate(64,949.5) scale(0.62)"><rect x="-9.500" y="-2.500" width="18.500" height="11" fill="url(#ghor)" stroke="#8a8a62" stroke-width="0.800"/><path d="M-9.500 3.500h18.500M-3.500 1v4.500M3 1v4.500" stroke="#8a8a62" stroke-width="0.700" fill="none" opacity="0.800"/><circle cx="-4" cy="-4.500" r="5.700" fill="#a9d18e" stroke="#7c8f5c" stroke-width="0.600"/></g>
<g transform="translate(164,949.5) scale(0.62)"><rect x="-9.500" y="-2.500" width="18.500" height="11" fill="url(#ghor)" stroke="#8a8a62" stroke-width="0.800"/><path d="M-9.500 3.500h18.500M-3.500 1v4.500M3 1v4.500" stroke="#8a8a62" stroke-width="0.700" fill="none" opacity="0.800"/><path d="M-1.500 -2.500c0.500-3.500 2-6 5-6s3.500 2.500 3 4-2 3-4 3" fill="none" stroke="#151515" stroke-width="2.300" stroke-linecap="round"/><path d="M0 -1.500c-3.500-0.500-6.500 0.500-7 3.500s1.500 4 3 4 3.500-1.500 4-3.500" fill="none" stroke="#151515" stroke-width="2.300" stroke-linecap="round"/><path d="M-8.500 -6.500l2.500 1.200M-6.500 -9l1.300 2.300M-4 -9.500l0.500 2M4.500 2l2.500 0.500M3.500 4l2 1.500" stroke="#151515" stroke-width="0.800"/></g>
<g transform="translate(196,949.5) scale(0.62)"><path d="M-10.500 -5l5.500-4.200v2.900h10v-2.900l5.500 4.200-5.500 4.200v-2.900h-10v2.900z" fill="#a9d18e" stroke="#7c8f5c" stroke-width="0.800" stroke-linejoin="round"/><path d="M-10.500 6.500h21M-10.500 3v7M-5.500 4.500v4M-0.500 4.500v4M5.500 4.500v4M10.500 3v7" fill="none" stroke="#8a8a62" stroke-width="0.900"/></g>
<g transform="translate(228,949.5) scale(0.62)"><path d="M-10.500 -5l5.500-4.200v2.900h10v-2.900l5.500 4.200-5.500 4.200v-2.900h-10v2.900z" fill="#a9d18e" stroke="#7c8f5c" stroke-width="0.800" stroke-linejoin="round"/><path d="M-10.500 6.500h21M-10.500 3v7M-5.500 4.500v4M-0.500 4.500v4M5.500 4.500v4M10.500 3v7" fill="none" stroke="#8a8a62" stroke-width="0.900"/><text x="3" y="10" font-family="Liberation Sans,sans-serif" font-weight="bold" font-size="12px" fill="#111">c</text></g>
<g transform="translate(260,949.5) scale(0.62)"><path d="M-10.500 -5l5.500-4.200v2.900h10v-2.900l5.500 4.200-5.500 4.200v-2.900h-10v2.900z" fill="#a9d18e" stroke="#7c8f5c" stroke-width="0.800" stroke-linejoin="round"/><path d="M-10.500 6.500h21M-10.500 3v7M-5.500 4.500v4M-0.500 4.500v4M5.500 4.500v4M10.500 3v7" fill="none" stroke="#8a8a62" stroke-width="0.900"/><text x="5" y="10.500" font-family="Liberation Sans,sans-serif" font-weight="bold" font-size="13px" fill="#111">t</text></g>
<g transform="translate(292,949.5) scale(1)"><path d="M-7.500 -5h4.500l1.500 1.500h8v8.500h-14z" fill="#f2c04a" stroke="#b89030" stroke-width="0.600"/><path d="M-6 -2.500h13.500v8h-13.500z" fill="#f8dc72" stroke="#b89030" stroke-width="0.600"/><path d="M1.500 7.500l-4.500-4.500c-1.500-2 1-4.500 2.800-3l1.700 1.500 1.700-1.500c1.800-1.500 4.300 1 2.800 3z" fill="#e03028"/></g>
<g transform="translate(324,949.5) scale(0.7)"><defs><linearGradient id="gvir" x1="0" y1="0" x2="0" y2="1"><stop offset="0" stop-color="#e6a820"/><stop offset="0.350" stop-color="#c8c050"/><stop offset="0.550" stop-color="#30b0d8"/><stop offset="0.800" stop-color="#3070c0"/><stop offset="1" stop-color="#6a3c98"/></linearGradient><linearGradient id="ghor" x1="0" y1="0" x2="1" y2="0"><stop offset="0" stop-color="#6a3c98"/><stop offset="0.300" stop-color="#3070c0"/><stop offset="0.500" stop-color="#30b0d8"/><stop offset="0.750" stop-color="#c8c050"/><stop offset="1" stop-color="#e6a820"/></linearGradient><linearGradient id="ghv" x1="0" y1="0" x2="1" y2="1"><stop offset="0" stop-color="#7a58a8"/><stop offset="0.350" stop-color="#3078c0"/><stop offset="0.550" stop-color="#38b0c8"/><stop offset="0.800" stop-color="#d8b838"/><stop offset="1" stop-color="#e6a020"/></linearGradient></defs><rect x="-5.500" y="-9" width="11" height="18" fill="url(#gvir)" stroke="#8a8a62" stroke-width="0.8"/></g>
<g transform="translate(356,949.5) scale(1)"><defs><linearGradient id="gec" x1="0" y1="0" x2="0" y2="1"><stop offset="0" stop-color="#f08020"/><stop offset="0.400" stop-color="#f0c030"/><stop offset="0.650" stop-color="#30a0e0"/><stop offset="1" stop-color="#6030a0"/></linearGradient></defs><rect x="-7" y="-8" width="7.500" height="16" fill="url(#gec)" stroke="#888" stroke-width="0.500"/><text x="-3.500" y="8" font-family="Liberation Sans,sans-serif" font-weight="bold" font-style="italic" font-size="15px" fill="#111">e</text></g>
</svg>
<div class="a" style="left:0;top:966px;width:371px;height:12px;overflow:hidden"><div class="t b" style="left:7px;top:3px;font-size:12px;letter-spacing:-0.1px">Styling</div></div>
<div class="a" style="left:0;top:978px;width:393px;height:9px;background:#f0f0f0"></div>
<!-- view toolbars -->
<svg class="a" style="left:398px;top:166px" width="1122" height="27" viewBox="398 166 1122 27">
<defs><linearGradient id="gbtn" x1="0" y1="0" x2="0" y2="1"><stop offset="0" stop-color="#fdfdfd"/><stop offset="1" stop-color="#e9e9e9"/></linearGradient></defs>
<g transform="translate(414,179)"><path d="M-7.500 -4.500h3l1-1.800h7l1 1.800h3v10h-15z" fill="#b8b8b8" stroke="#808080" stroke-width="0.800"/><circle cx="0" cy="0.500" r="3.600" fill="#eee" stroke="#808080" stroke-width="0.800"/><circle cx="0" cy="0.500" r="2.200" fill="#cfe4f6"/><circle cx="-5.800" cy="-2.800" r="0.600" fill="#e05050"/><path d="M-8 7l5.500 2-1-2.500q3.500-3 4 3l2 1q2-9.500-7-7l-1-2.500z" fill="#e81c24" stroke="#b01018" stroke-width="0.400"/></g>
<g transform="translate(440,179)"><path d="M-7.500 -4.500h3l1-1.800h7l1 1.800h3v10h-15z" fill="#c9c9c9" stroke="#aaa" stroke-width="0.800"/><circle cx="0" cy="0.500" r="3.600" fill="#eee" stroke="#aaa" stroke-width="0.800"/><circle cx="0" cy="0.500" r="2.200" fill="#e4e4e4"/><circle cx="-5.800" cy="-2.800" r="0.600" fill="#e05050"/><g transform="scale(-1,1)"><path d="M-8 7l5.500 2-1-2.500q3.500-3 4 3l2 1q2-9.500-7-7l-1-2.500z" fill="#ccc" stroke="#aaa" stroke-width="0.400"/></g></g>
<g transform="translate(472,179)"><path d="M-7.500 -4.500h3l1-1.800h7l1 1.800h3v10h-15z" fill="#b8b8b8" stroke="#808080" stroke-width="0.800"/><circle cx="0" cy="0.500" r="3.600" fill="#eee" stroke="#808080" stroke-width="0.800"/><circle cx="0" cy="0.500" r="2.200" fill="#cfe4f6"/><circle cx="-5.800" cy="-2.800" r="0.600" fill="#e05050"/><path d="M-9 -5v-3.500h3M6 -8.500h3v3.500M9 5.500v3.500h-3M-6 9h-3v-3.500" fill="none" stroke="#777" stroke-width="0.800"/></g>
<g transform="translate(530,179)"><path d="M-7.500 -4.500h3l1-1.800h7l1 1.800h3v10h-15z" fill="#b8b8b8" stroke="#808080" stroke-width="0.800"/><circle cx="0" cy="0.500" r="3.600" fill="#eee" stroke="#808080" stroke-width="0.800"/><circle cx="0" cy="0.500" r="2.200" fill="#cfe4f6"/><circle cx="-5.800" cy="-2.800" r="0.600" fill="#e05050"/><circle cx="0.500" cy="0.500" r="3.800" fill="#dce8f4" fill-opacity="0.800" stroke="#777" stroke-width="1"/><path d="M3 3.500l5 5" stroke="#d8a020" stroke-width="2.400" stroke-linecap="round"/><path d="M7.500 8l1.300 1.300" stroke="#444" stroke-width="1.500"/></g>
<g transform="translate(562,179)"><rect x="-8" y="-8" width="16" height="16" fill="none" stroke="#858585" stroke-width="0.800" stroke-dasharray="2.500 1.800"/><path d="M-3.8 0h7.6M0 -3.8v7.6" stroke="#6f9a4c" stroke-width="3.2"/><path d="M-3.3 0h6.6M0 -3.3v6.6" stroke="#a9d18e" stroke-width="2.2"/></g>
<g transform="translate(588,179)"><rect x="-8" y="-8" width="16" height="16" fill="none" stroke="#858585" stroke-width="0.800" stroke-dasharray="2.500 1.800"/><path d="M-4 0h8" stroke="#e02828" stroke-width="2.800"/></g>
<g transform="translate(614,179)"><rect x="-8" y="-8" width="16" height="16" fill="none" stroke="#858585" stroke-width="0.800" stroke-dasharray="2.500 1.800"/><path d="M-5 -3.5h6M-2 -6.5v6" stroke="#6f9a4c" stroke-width="2.8"/><path d="M-4.5 -3.5h5M-2 -6.0v5" stroke="#a9d18e" stroke-width="1.8"/><path d="M-5 3.500h6.500" stroke="#e02828" stroke-width="2.200"/><path d="M2.500 2.500l6 5-2.500 0.200 1.400 2.500-1.300 0.600-1.300-2.600-1.700 1.600z" fill="#555"/></g>
<g transform="translate(646,179)"><rect x="-8" y="-8" width="16" height="16" fill="none" stroke="#858585" stroke-width="0.800" stroke-dasharray="2.500 1.800"/><path d="M0 -5.500l5.500 10h-11z" fill="#a9d18e" stroke="#6f9a4c" stroke-width="0.700"/><path d="M3 3l5.500 4.500-2.300 0.200 1.300 2.300-1.200 0.600-1.200-2.400-1.600 1.500z" fill="#555"/></g>
<g transform="translate(672,179)"><rect x="-8" y="-8" width="16" height="16" fill="none" stroke="#858585" stroke-width="0.800" stroke-dasharray="2.500 1.800"/><path d="M0 -6l5.500 10.500h-11z" fill="none" stroke="#888" stroke-width="0.700"/><circle cx="0" cy="-6" r="1.100" fill="#d04020"/><circle cx="-5.500" cy="4.500" r="1.100" fill="#d04020"/><circle cx="5.500" cy="4.500" r="1.100" fill="#d04020"/><path d="M3 3l5.500 4.500-2.300 0.200 1.300 2.300-1.200 0.600-1.200-2.400-1.600 1.500z" fill="#555"/></g>
<g transform="translate(699,179)"><rect x="-8" y="-8" width="16" height="16" fill="none" stroke="#858585" stroke-width="0.800" stroke-dasharray="2.500 1.800"/><path d="M-5.500 -2.500l6-4 5.500 1.500v5l-7 4.500-4.500-2z" fill="#a9d18e" stroke="#6f9a4c" stroke-width="0.700"/><path d="M-5.500 -2.500l5 1.500 6.500-4M-0.500 -1v6" fill="none" stroke="#6f9a4c" stroke-width="0.600"/><path d="M0 4l5 4.500-2.200 0.200 1.200 2.200-1.100 0.500-1.200-2.300-1.500 1.400z" fill="#555"/></g>
<g transform="translate(725,179)"><path d="M-8 -5.500l9-3 7 2.500v8l-9 3.500-7-3z M-8 -5.500l7 2.500 9-3.500M-1 -3v8.500" fill="none" stroke="#999" stroke-width="0.700" stroke-dasharray="2 1.300"/><circle cx="-8" cy="-5.5" r="0.900" fill="#e04030"/><circle cx="1" cy="-8.5" r="0.900" fill="#e04030"/><circle cx="8" cy="-6" r="0.900" fill="#e04030"/><circle cx="8" cy="2" r="0.900" fill="#e04030"/><circle cx="-1" cy="5.5" r="0.900" fill="#e04030"/><circle cx="-8" cy="2.5" r="0.900" fill="#e04030"/><circle cx="-1" cy="-3" r="0.900" fill="#e04030"/><circle cx="-5" cy="-1" r="0.900" fill="#e04030"/><path d="M0 4l5 4.500-2.200 0.200 1.200 2.200-1.100 0.500-1.200-2.300-1.500 1.400z" fill="#555"/></g>
<g transform="translate(750,179)"><path d="M-8.500 -5l10-3.500 6.500 3.500v7.500l-10 4.500z" fill="none" stroke="#999" stroke-width="0.700" stroke-dasharray="2 1.300"/><path d="M-6 0.500l7.500-5v9.500z" fill="#a9d18e" stroke="#6f9a4c" stroke-width="0.700"/><path d="M4 5l4 2" stroke="#999" stroke-width="0.800" stroke-dasharray="1.500 1"/></g>
<g transform="translate(988,179)"><path d="M-7.500 -4.500h3l1-1.800h7l1 1.800h3v10h-15z" fill="#b8b8b8" stroke="#808080" stroke-width="0.800"/><circle cx="0" cy="0.500" r="3.600" fill="#eee" stroke="#808080" stroke-width="0.800"/><circle cx="0" cy="0.500" r="2.200" fill="#cfe4f6"/><circle cx="-5.800" cy="-2.800" r="0.600" fill="#e05050"/><path d="M-9 -5v-3.500h3M6 -8.500h3v3.500M9 5.500v3.500h-3M-6 9h-3v-3.500" fill="none" stroke="#777" stroke-width="0.800"/></g>
<g transform="translate(1020,179)"><rect x="-8" y="-8" width="16" height="16" fill="none" stroke="#858585" stroke-width="0.800" stroke-dasharray="2.500 1.800"/><path d="M-3.8 0h7.6M0 -3.8v7.6" stroke="#6f9a4c" stroke-width="3.2"/><path d="M-3.3 0h6.6M0 -3.3v6.6" stroke="#a9d18e" stroke-width="2.2"/></g>
<g transform="translate(1046,179)"><rect x="-8" y="-8" width="16" height="16" fill="none" stroke="#858585" stroke-width="0.800" stroke-dasharray="2.500 1.800"/><path d="M-4 0h8" stroke="#e02828" stroke-width="2.800"/></g>
<g transform="translate(1072,179)"><rect x="-8" y="-8" width="16" height="16" fill="none" stroke="#858585" stroke-width="0.800" stroke-dasharray="2.500 1.800"/><path d="M-5 -3.5h6M-2 -6.5v6" stroke="#6f9a4c" stroke-width="2.8"/><path d="M-4.5 -3.5h5M-2 -6.0v5" stroke="#a9d18e" stroke-width="1.8"/><path d="M-5 3.500h6.500" stroke="#e02828" stroke-width="2.200"/><path d="M2.500 2.500l6 5-2.500 0.200 1.400 2.500-1.300 0.600-1.300-2.600-1.700 1.600z" fill="#555"/></g>
<g transform="translate(1103,179)"><path d="M-8 -7.500h14l-3 15-8-2z" fill="none" stroke="#999" stroke-width="0.700" stroke-dasharray="2 1.300"/><circle cx="-4.5" cy="-4" r="1.200" fill="#c84830"/><circle cx="-0.5" cy="-1" r="1.200" fill="#c84830"/><circle cx="2.5" cy="-4.5" r="1.200" fill="#c84830"/><circle cx="-4" cy="1.5" r="1.200" fill="#c84830"/><circle cx="0" cy="3.5" r="1.200" fill="#c84830"/><circle cx="3.5" cy="1" r="1.200" fill="#c84830"/><circle cx="-1.5" cy="-6" r="1.200" fill="#c84830"/><circle cx="3.8" cy="4.5" r="1.200" fill="#c84830"/><path d="M6.500 3l2 1.500" stroke="#777" stroke-width="0.800"/></g>
<g transform="translate(1130,179)"><rect x="-8" y="-8" width="16" height="16" fill="none" stroke="#858585" stroke-width="0.800" stroke-dasharray="2.500 1.800"/><path d="M2 2l6 1.500-1.700 1.300 2.500 2.800-1.300 1.200-2.600-2.700-1.300 1.700z" fill="#a9d18e" stroke="#6f9a4c" stroke-width="0.600"/></g>
<g transform="translate(1156,179)"><defs><linearGradient id="gtr" x1="0" y1="0" x2="1" y2="0"><stop offset="0" stop-color="#aaa"/><stop offset="0.500" stop-color="#d4d4d4"/><stop offset="1" stop-color="#9a9a9a"/></linearGradient></defs><path d="M-6 -5h12l-1 13.500h-10z" fill="url(#gtr)"/><path d="M-7 -5.500q0-3 7-3t7 3z" fill="#b0b0b0"/><path d="M-7 -5h14" stroke="#999" stroke-width="0.800"/></g>
<path d="M456.5 171v16" stroke="#c8c8c8"/>
<path d="M488.5 171v16" stroke="#c8c8c8"/>
<path d="M546.5 171v16" stroke="#c8c8c8"/>
<path d="M630.5 171v16" stroke="#c8c8c8"/>
<path d="M1004.5 171v16" stroke="#c8c8c8"/>
<path d="M1088.5 171v16" stroke="#c8c8c8"/>
<rect x="865.0" y="167.500" width="24.500" height="24" rx="3" fill="url(#gbtn)" stroke="#adadad"/><rect x="892.0" y="167.500" width="24.500" height="24" rx="3" fill="url(#gbtn)" stroke="#adadad"/><rect x="919.0" y="167.500" width="24.500" height="24" rx="3" fill="url(#gbtn)" stroke="#adadad"/><rect x="946.0" y="167.500" width="24.500" height="24" rx="3" fill="url(#gbtn)" stroke="#adadad"/><rect x="871.0" y="173.500" width="12" height="12" fill="#d4daf0" stroke="#98a0b8"/><path d="M877.0 173.500v12" stroke="#98a0b8"/><rect x="898.0" y="173.500" width="12" height="12" fill="#d4daf0" stroke="#98a0b8"/><path d="M898.0 179.500h12" stroke="#98a0b8"/><rect x="923.5" y="172" width="15" height="15" fill="#fff" stroke="#2a2a2a" stroke-width="2"/><rect x="922.5" y="171" width="17" height="4.500" fill="#2a2a2a"/><rect x="953.5" y="175" width="9.500" height="9.500" rx="2" fill="#f8f8f8" stroke="#555" stroke-width="0.900"/><path d="M955.8 177.300l5 5M960.8 177.300l-5 5" stroke="#333" stroke-width="1.700"/>
<rect x="1413.5" y="167.500" width="24.500" height="24" rx="3" fill="url(#gbtn)" stroke="#adadad"/><rect x="1440.5" y="167.500" width="24.500" height="24" rx="3" fill="url(#gbtn)" stroke="#adadad"/><rect x="1467.5" y="167.500" width="24.500" height="24" rx="3" fill="url(#gbtn)" stroke="#adadad"/><rect x="1494.5" y="167.500" width="24.500" height="24" rx="3" fill="url(#gbtn)" stroke="#adadad"/><rect x="1419.5" y="173.500" width="12" height="12" fill="#d4daf0" stroke="#98a0b8"/><path d="M1425.5 173.500v12" stroke="#98a0b8"/><rect x="1446.5" y="173.500" width="12" height="12" fill="#d4daf0" stroke="#98a0b8"/><path d="M1446.5 179.500h12" stroke="#98a0b8"/><rect x="1472" y="172" width="15" height="15" fill="#fff" stroke="#2a2a2a" stroke-width="2"/><rect x="1471" y="171" width="17" height="4.500" fill="#2a2a2a"/><rect x="1502" y="175" width="9.500" height="9.500" rx="2" fill="#f8f8f8" stroke="#555" stroke-width="0.900"/><path d="M1504.3 177.300l5 5M1509.3 177.300l-5 5" stroke="#333" stroke-width="1.700"/>
<text x="497.500" y="183.500" font-family="Liberation Sans,sans-serif" font-weight="bold" font-size="11.500px" fill="#5f5f48" letter-spacing="-0.2">2D</text>
</svg>
<div class="t" style="left:769px;top:172px;font-size:13px">»</div>
<div class="t b" style="left:779px;top:173px;font-size:12px;letter-spacing:-0.1px;text-decoration:underline">RenderView1</div>
<div class="t" style="left:1327px;top:173px">LineChartView1</div>
<!-- splitter / tab area -->
<div class="a" style="left:398px;top:165px;width:1122px;height:1px;background:#a8a8a8"></div>
<div class="a" style="left:399px;top:139px;width:110px;height:27px;background:linear-gradient(#ffffff,#f6f6f6 60%,#f0f0f0);border:1px solid #b4b4b4;border-bottom:none;border-radius:3px 3px 0 0"></div>
<div class="a" style="left:508px;top:141px;width:32px;height:24px;background:linear-gradient(#f4f4f4,#e2e2e2);border:1px solid #b4b4b4;border-bottom:none;border-radius:3px 3px 0 0"></div>
<div class="a" style="left:411px;top:145px;width:16px;height:15px;border:1.5px solid #222;border-top:4px solid #222;background:#fff"></div>
<div class="t" style="left:430px;top:147px;letter-spacing:0.2px">Layout #1</div>
<svg class="a" style="left:484px;top:147px" width="11" height="11" viewBox="0 0 11 11"><rect x="0.5" y="0.5" width="10" height="10" rx="2" fill="#f8f8f8" stroke="#555"/><path d="M3 3l5 5M8 3l-5 5" stroke="#333" stroke-width="1.8"/></svg>
<div class="t" style="left:519px;top:148px;font-size:13px">+</div>

<!-- pane border -->
<div class="a" style="left:399px;top:165px;width:1px;height:821px;background:#b8b8b8"></div>
<div class="a" style="left:399px;top:985px;width:1121px;height:1px;background:#b8b8b8"></div>
<!-- render view -->
<div class="a" style="left:401px;top:193px;width:570px;height:792px;background:#0000ff"></div>
<div class="a" style="left:403px;top:195px;width:566px;height:788px;background:#f4f4f4"></div>
<div class="a" style="left:404px;top:196px;width:564px;height:786px;background:#52566e"></div>
<svg class="a" style="left:404px;top:196px" width="564" height="786" viewBox="404 196 564 786">
<defs>
<clipPath id="mesh"><path d="M437.3 285H746V626.5L760 662.8H935V892.5H437.3Z"/></clipPath>
<linearGradient id="cbar" x1="0" y1="1" x2="0" y2="0"><stop offset="0" stop-color="#3b4cc0"/><stop offset="0.125" stop-color="#6282ea"/><stop offset="0.25" stop-color="#8db0fe"/><stop offset="0.375" stop-color="#b8d0f9"/><stop offset="0.5" stop-color="#dddddd"/><stop offset="0.625" stop-color="#f5c4ad"/><stop offset="0.75" stop-color="#f49a7b"/><stop offset="0.875" stop-color="#de604d"/><stop offset="1" stop-color="#b40426"/></linearGradient>
<linearGradient id="topband" x1="0" y1="285" x2="0" y2="345" gradientUnits="userSpaceOnUse">
<stop offset="0" stop-color="#8e001c"/><stop offset="0.08" stop-color="#8e001c"/><stop offset="0.13" stop-color="#c4674c"/><stop offset="0.22" stop-color="#c9a08a"/><stop offset="0.32" stop-color="#aeb0b4"/><stop offset="0.48" stop-color="#7f96c6" stop-opacity="0.9"/><stop offset="0.75" stop-color="#5570b8" stop-opacity="0.6"/><stop offset="1" stop-color="#4a63b0" stop-opacity="0"/>
</linearGradient>
<linearGradient id="rightband" x1="746" y1="0" x2="700" y2="0" gradientUnits="userSpaceOnUse">
<stop offset="0" stop-color="#8e001c"/><stop offset="0.07" stop-color="#8e001c"/><stop offset="0.12" stop-color="#c4674c"/><stop offset="0.3" stop-color="#c9a08a"/><stop offset="0.5" stop-color="#aeb0b4"/><stop offset="0.75" stop-color="#7f96c6" stop-opacity="0.8"/><stop offset="1" stop-color="#5570b8" stop-opacity="0"/>
</linearGradient>
<filter id="bl60" filterUnits="userSpaceOnUse" x="100" y="0" width="1200" height="1200"><feGaussianBlur stdDeviation="60"/></filter>
<filter id="bl30" filterUnits="userSpaceOnUse" x="100" y="0" width="1200" height="1200"><feGaussianBlur stdDeviation="30"/></filter>
<filter id="bl18" filterUnits="userSpaceOnUse" x="100" y="0" width="1200" height="1200"><feGaussianBlur stdDeviation="18"/></filter>
<filter id="bl10" filterUnits="userSpaceOnUse" x="100" y="0" width="1200" height="1200"><feGaussianBlur stdDeviation="10"/></filter>
<filter id="bl4" filterUnits="userSpaceOnUse" x="100" y="0" width="1200" height="1200"><feGaussianBlur stdDeviation="4"/></filter>
<filter id="bl1" filterUnits="userSpaceOnUse" x="100" y="0" width="1200" height="1200"><feGaussianBlur stdDeviation="1.2"/></filter>
<filter id="bl7" filterUnits="userSpaceOnUse" x="100" y="0" width="1200" height="1200"><feGaussianBlur stdDeviation="7"/></filter>
<filter id="bl05" filterUnits="userSpaceOnUse" x="100" y="0" width="1200" height="1200"><feGaussianBlur stdDeviation="0.5"/></filter>
<linearGradient id="tailg" x1="0" y1="540" x2="0" y2="605" gradientUnits="userSpaceOnUse"><stop offset="0" stop-color="#fff"/><stop offset="1" stop-color="#000"/></linearGradient>
<mask id="tailmask" maskUnits="userSpaceOnUse" x="400" y="250" width="600" height="700"><rect x="400" y="250" width="600" height="700" fill="url(#tailg)"/></mask>
</defs>
<g clip-path="url(#mesh)">
<rect x="430" y="280" width="520" height="620" fill="#7990c2"/>
<!-- warm notch diffusion -->
<path d="M746 600V626.5L760 662.8H945" fill="none" stroke="#a6adb7" stroke-width="180" stroke-linejoin="round" filter="url(#bl60)" opacity="0.95"/>
<path d="M746 592V626.5L760 662.8H945" fill="none" stroke="#a4abb5" stroke-width="44" stroke-linejoin="round" filter="url(#bl18)"/>
<!-- light ridge -->
<path d="M400 425H585L735 640" fill="none" stroke="#899bc2" stroke-width="120" stroke-linejoin="round" filter="url(#bl30)"/>
<ellipse cx="580" cy="420" rx="60" ry="65" fill="#8b9dc3" filter="url(#bl30)" opacity="0.9"/>
<!-- blue band under top -->
<rect x="400" y="316" width="330" height="32" fill="#4a62b0" filter="url(#bl10)"/>
<rect x="400" y="330" width="330" height="44" fill="#4a62b0" filter="url(#bl18)" opacity="0.55"/>
<!-- blue band along right -->
<rect x="664" y="330" width="54" height="260" fill="#4a62b0" filter="url(#bl18)" opacity="0.75"/>
<rect x="682" y="330" width="36" height="228" fill="#4860b0" filter="url(#bl10)" opacity="0.95"/>
<ellipse cx="650" cy="336" rx="75" ry="18" fill="#3a4ca0" filter="url(#bl18)" opacity="0.85"/>
<ellipse cx="696" cy="390" rx="16" ry="55" fill="#3a4ca0" filter="url(#bl18)" opacity="0.6"/>
<g mask="url(#tailmask)">
<path d="M430 280H750V612.0H696.0V367.0Q696.0 331.0 660.0 331.0H430Z" fill="#4a62b0" fill-opacity="0.00"/>
<path d="M430 280H750V612.0H697.3V365.7Q697.3 329.7 661.3 329.7H430Z" fill="#4b63b1" fill-opacity="0.07"/>
<path d="M430 280H750V612.0H698.6V364.4Q698.6 328.4 662.6 328.4H430Z" fill="#4c64b2" fill-opacity="0.14"/>
<path d="M430 280H750V612.0H699.9V363.1Q699.9 327.1 663.9 327.1H430Z" fill="#4d65b2" fill-opacity="0.21"/>
<path d="M430 280H750V612.0H701.1V361.9Q701.1 325.9 665.1 325.9H430Z" fill="#4e66b3" fill-opacity="0.28"/>
<path d="M430 280H750V612.0H702.4V360.6Q702.4 324.6 666.4 324.6H430Z" fill="#4f67b4" fill-opacity="0.35"/>
<path d="M430 280H750V612.0H703.7V359.3Q703.7 323.3 667.7 323.3H430Z" fill="#5068b5" fill-opacity="0.42"/>
<path d="M430 280H750V612.0H705.0V358.0Q705.0 322.0 669.0 322.0H430Z" fill="#5169b5" fill-opacity="0.50"/>
<path d="M430 280H750V612.0H706.3V356.8Q706.3 320.8 670.3 320.8H430Z" fill="#536bb6" fill-opacity="0.56"/>
<path d="M430 280H750V612.0H707.4V355.7Q707.4 319.7 671.4 319.7H430Z" fill="#566eb8" fill-opacity="0.61"/>
<path d="M430 280H750V612.0H708.6V354.3Q708.6 318.7 673.0 318.7H430Z" fill="#5971b9" fill-opacity="0.65"/>
<path d="M430 280H750V612.0H709.7V352.1Q709.7 317.7 675.3 317.7H430Z" fill="#5c75bb" fill-opacity="0.70"/>
<path d="M430 280H750V612.0H710.9V350.0Q710.9 316.7 677.5 316.7H430Z" fill="#5f78bd" fill-opacity="0.74"/>
<path d="M430 280H750V612.0H712.0V347.9Q712.0 315.6 679.8 315.6H430Z" fill="#627bbe" fill-opacity="0.79"/>
<path d="M430 280H750V612.0H713.2V345.8Q713.2 314.6 682.0 314.6H430Z" fill="#657fc0" fill-opacity="0.83"/>
<path d="M430 280H750V612.0H714.4V343.6Q714.4 313.6 684.3 313.6H430Z" fill="#6882c1" fill-opacity="0.88"/>
<path d="M430 280H750V612.0H715.5V341.6Q715.5 312.6 686.4 312.6H430Z" fill="#6c86c2" fill-opacity="0.91"/>
<path d="M430 280H750V612.0H716.5V339.7Q716.5 311.7 688.4 311.7H430Z" fill="#7189c3" fill-opacity="0.92"/>
<path d="M430 280H750V612.0H717.5V337.9Q717.5 310.8 690.5 310.8H430Z" fill="#758dc3" fill-opacity="0.93"/>
<path d="M430 280H750V612.0H718.5V336.0Q718.5 309.9 692.5 309.9H430Z" fill="#7a90c4" fill-opacity="0.94"/>
<path d="M430 280H750V612.0H719.6V334.1Q719.6 309.0 694.5 309.0H430Z" fill="#7f94c4" fill-opacity="0.96"/>
<path d="M430 280H750V612.0H720.6V332.2Q720.6 308.1 696.5 308.1H430Z" fill="#8398c5" fill-opacity="0.97"/>
<path d="M430 280H750V612.0H721.6V330.4Q721.6 307.2 698.5 307.2H430Z" fill="#889bc5" fill-opacity="0.98"/>
</g>
<path d="M430 280H750V594.0Q727.3 589.3 722.7 574.2V328.5Q722.7 306.3 700.5 306.3H430Z" fill="#8c9fc6"/>
<path d="M430 280H750V593.7Q728.0 589.2 723.6 574.7V326.8Q723.6 305.5 702.2 305.5H430Z" fill="#91a1c4"/>
<path d="M430 280H750V593.5Q728.7 589.2 724.4 575.1V325.3Q724.4 304.8 703.9 304.8H430Z" fill="#95a3c1"/>
<path d="M430 280H750V593.2Q729.4 589.1 725.2 575.6V323.8Q725.2 304.1 705.5 304.1H430Z" fill="#99a5be"/>
<path d="M430 280H750V593.0Q730.1 589.0 726.1 576.0V322.3Q726.1 303.4 707.1 303.4H430Z" fill="#9da8bc"/>
<path d="M430 280H750V592.7Q730.7 588.9 726.9 576.5V320.8Q726.9 302.7 708.8 302.7H430Z" fill="#a1aab9"/>
<path d="M430 280H750V592.5Q731.4 588.8 727.7 577.0V319.3Q727.7 302.0 710.4 302.0H430Z" fill="#a5acb6"/>
<path d="M430 280H750V592.2Q732.1 588.7 728.6 577.4V317.8Q728.6 301.3 712.0 301.3H430Z" fill="#a9aeb3"/>
<path d="M430 280H750V592.0Q732.7 588.7 729.4 577.9V316.3Q729.4 300.6 713.6 300.6H430Z" fill="#aeb0b0"/>
<path d="M430 280H750V591.8Q733.2 588.6 730.0 578.2V315.3Q730.0 300.1 714.8 300.1H430Z" fill="#b1aeac"/>
<path d="M430 280H750V591.6Q733.7 588.5 730.6 578.5V314.3Q730.6 299.6 716.0 299.6H430Z" fill="#b3aca7"/>
<path d="M430 280H750V591.4Q734.1 588.5 731.2 578.8V313.3Q731.2 299.2 717.1 299.2H430Z" fill="#b6aaa2"/>
<path d="M430 280H750V591.3Q734.6 588.4 731.8 579.2V312.3Q731.8 298.8 718.2 298.8H430Z" fill="#b9a89d"/>
<path d="M430 280H750V591.1Q735.1 588.4 732.3 579.5V311.3Q732.3 298.3 719.3 298.3H430Z" fill="#bca698"/>
<path d="M430 280H750V590.9Q735.5 588.3 732.9 579.8V310.3Q732.9 297.9 720.5 297.9H430Z" fill="#bfa493"/>
<path d="M430 280H750V590.8Q736.0 588.3 733.5 580.1V309.3Q733.5 297.4 721.6 297.4H430Z" fill="#c1a28e"/>
<path d="M430 280H750V590.6Q736.4 588.2 734.1 580.4V308.3Q734.1 297.0 722.7 297.0H430Z" fill="#c4a08a"/>
<path d="M430 280H750V590.4Q736.9 588.1 734.6 580.7V307.6Q734.6 296.6 723.6 296.6H430Z" fill="#c59c85"/>
<path d="M430 280H750V590.3Q737.3 588.1 735.1 581.0V306.8Q735.1 296.2 724.5 296.2H430Z" fill="#c59881"/>
<path d="M430 280H750V590.1Q737.7 588.0 735.6 581.3V306.1Q735.6 295.8 725.3 295.8H430Z" fill="#c6947d"/>
<path d="M430 280H750V590.0Q738.1 588.0 736.1 581.6V305.3Q736.1 295.4 726.2 295.4H430Z" fill="#c69179"/>
<path d="M430 280H750V589.8Q738.5 587.9 736.6 581.8V304.6Q736.6 295.0 727.1 295.0H430Z" fill="#c78d75"/>
<path d="M430 280H750V589.7Q738.9 587.9 737.1 582.1V303.8Q737.1 294.6 728.0 294.6H430Z" fill="#c78971"/>
<path d="M430 280H750V589.5Q739.3 587.8 737.7 582.4V303.1Q737.7 294.3 728.9 294.3H430Z" fill="#c8856d"/>
<path d="M430 280H750V589.4Q739.7 587.8 738.1 582.7V302.3Q738.1 293.9 729.7 293.9H430Z" fill="#c88168"/>
<path d="M430 280H750V589.2Q740.1 587.7 738.6 582.9V301.7Q738.6 293.6 730.4 293.6H430Z" fill="#c77c63"/>
<path d="M430 280H750V589.1Q740.4 587.7 739.0 583.2V301.1Q739.0 293.2 731.2 293.2H430Z" fill="#c6765f"/>
<path d="M430 280H750V589.0Q740.8 587.7 739.5 583.4V300.5Q739.5 292.9 731.9 292.9H430Z" fill="#c5715a"/>
<path d="M430 280H750V588.8Q741.1 587.6 739.9 583.6V299.8Q739.9 292.6 732.7 292.6H430Z" fill="#c46b55"/>
<path d="M430 280H750V588.7Q741.5 587.6 740.3 583.9V299.2Q740.3 292.3 733.4 292.3H430Z" fill="#c36650"/>
<path d="M430 280H750V588.6Q741.8 587.5 740.8 584.1V298.6Q740.8 292.0 734.2 292.0H430Z" fill="#c1604b"/>
<path d="M430 280H750V588.4Q742.2 587.5 741.2 584.4V298.0Q741.2 291.6 734.9 291.6H430Z" fill="#c05a46"/>
<path d="M430 280H750V588.3Q742.5 587.4 741.6 584.6V297.2Q741.6 291.2 735.6 291.2H430Z" fill="#bc5241"/>
<path d="M430 280H750V588.2Q742.7 587.4 741.9 584.7V296.2Q741.9 290.8 736.4 290.8H430Z" fill="#b6463c"/>
<path d="M430 280H750V588.1Q743.0 587.4 742.2 584.9V295.3Q742.2 290.3 737.2 290.3H430Z" fill="#b03b37"/>
<path d="M430 280H750V588.1Q743.2 587.4 742.5 585.1V294.4Q742.5 289.8 737.9 289.8H430Z" fill="#a93032"/>
<path d="M430 280H750V588.0Q743.4 587.3 742.8 585.2V293.4Q742.8 289.3 738.7 289.3H430Z" fill="#a3242d"/>
<path d="M430 280H750V587.9Q743.7 587.3 743.1 585.4V292.5Q743.1 288.9 739.5 288.9H430Z" fill="#9c1927"/>
<path d="M430 280H750V587.8Q743.9 587.3 743.4 585.6V291.6Q743.4 288.4 740.2 288.4H430Z" fill="#960e22"/>
<path d="M430 280H750V587.7Q744.2 587.2 743.7 585.8V290.7Q743.7 287.9 741.0 287.9H430Z" fill="#8f031d"/>
<path d="M430 280H750V587.5L743.7 583.0V287.8H430Z" fill="#8e001c"/>
<path d="M437 288H640L600 294H437Z" fill="#c0584a" opacity="0.6" filter="url(#bl1)"/><path d="M437 285H640V287.5L628.4 288.9L615.2 290.9L602.6 292.6L596.3 291.2L581.8 291.9L567.7 289.8L557.5 290.3L546.6 291.6L540.5 290.2L532.0 293.0L519.1 289.9L505.9 289.9L494.3 289.8L488.3 292.8L480.4 290.2L465.6 292.8L457.0 293.1L446.1 292.0L438.3 293.1L437.0 293.2Z" fill="#8e001c" filter="url(#bl05)"/>
<ellipse cx="690" cy="343" rx="24" ry="23" fill="#28348c" filter="url(#bl10)" opacity="0.95"/>
<ellipse cx="691" cy="343" rx="13" ry="13" fill="#27338c" filter="url(#bl7)"/>
</g>
<!-- line widget -->
<line x1="557" y1="436" x2="745" y2="436" stroke="#fff" stroke-width="1.6"/>
<circle cx="557" cy="436" r="4" fill="#d8d8d0" stroke="#9a9a92" stroke-width="0.6"/>
<path d="M739 432.5L752 436L739 439.5Z" fill="#d0d0cc"/>
<!-- colorbar -->
<rect x="814" y="385.5" width="16" height="259.5" fill="url(#cbar)"/>
<g stroke="#fff" stroke-width="1.3">
<line x1="826" y1="385.5" x2="838" y2="385.5"/><line x1="826" y1="425.5" x2="838" y2="425.5"/><line x1="826" y1="461" x2="838" y2="461"/><line x1="826" y1="497" x2="838" y2="497"/><line x1="826" y1="532.5" x2="838" y2="532.5"/><line x1="826" y1="567.5" x2="838" y2="567.5"/><line x1="826" y1="604.5" x2="838" y2="604.5"/><line x1="826" y1="645.3" x2="838" y2="645.3"/>
</g>
<g fill="#fff" font-family="Liberation Sans,sans-serif" font-size="16.5px" letter-spacing="0">
<text x="845" y="391" textLength="57" lengthAdjust="spacingAndGlyphs">2.6e+01</text>
<text x="844" y="431">25</text><text x="844" y="466.5">24</text><text x="844" y="502.5">23</text><text x="844" y="538">22</text><text x="844" y="573">21</text><text x="844" y="610">20</text>
<text x="845" y="649.5" textLength="57" lengthAdjust="spacingAndGlyphs">1.9e+01</text>
<text transform="translate(921,582) rotate(-90)" textLength="134" lengthAdjust="spacingAndGlyphs">solid temperature</text>
</g>
<!-- orientation axes -->
<line x1="502.600" y1="883" x2="502.600" y2="839" stroke="#e8e020" stroke-width="1.200"/>
<path d="M498.500 839.700L502.600 829L506.500 839.700Z" fill="#e8e010" stroke="#555" stroke-width="0.400"/>
<line x1="508" y1="883.500" x2="515" y2="883.500" stroke="#fff" stroke-width="1"/>
<line x1="514.500" y1="883.500" x2="547" y2="883.500" stroke="#e81414" stroke-width="1.200"/>
<path d="M546.300 879.300L557 883.500L546.300 887.600Z" fill="#e80c0c" stroke="#500" stroke-width="0.400"/>
<circle cx="502.500" cy="883.500" r="4.500" fill="#0a5a14"/>
<g fill="#fff" font-family="Liberation Sans,sans-serif" font-size="16px" letter-spacing="0">
<text x="504.500" y="839.500">Y</text><text x="505" y="882.500">Z</text><text x="548.500" y="884">X</text>
</g>
</svg>
<!-- chart -->
<svg class="a" style="left:978px;top:196px" width="539" height="786" viewBox="978 196 539 786">
<rect x="978" y="196" width="539" height="786" fill="#fff"/>
<path d="M1064.6 215V955M1112.7 215V955M1160.8 215V955M1208.9 215V955M1257.0 215V955M1305.2 215V955M1353.3 215V955M1401.4 215V955M1449.5 215V955M1497.6 215V955M1017 921.8H1497.5M1017 888.1H1497.5M1017 854.5H1497.5M1017 820.8H1497.5M1017 787.2H1497.5M1017 753.6H1497.5M1017 719.9H1497.5M1017 686.3H1497.5M1017 652.6H1497.5M1017 619.0H1497.5M1017 585.4H1497.5M1017 551.7H1497.5M1017 518.1H1497.5M1017 484.4H1497.5M1017 450.8H1497.5M1017 417.2H1497.5M1017 383.5H1497.5M1017 349.9H1497.5M1017 316.2H1497.5M1017 282.6H1497.5M1017 249.0H1497.5M1017 215.3H1497.5" stroke="#efefef" stroke-width="1" fill="none"/>
<path d="M1016.5 834.4C1024.5 833.9 1048.5 832.2 1064.5 831.3C1080.5 830.4 1096.6 828.8 1112.6 828.9C1128.6 829.0 1148.6 830.7 1160.6 831.8C1172.6 832.9 1176.6 833.8 1184.6 835.6C1192.6 837.4 1200.7 839.9 1208.7 842.7C1216.7 845.5 1224.7 848.6 1232.7 852.6C1240.7 856.6 1248.7 861.6 1256.7 866.8C1264.7 872.0 1272.8 877.9 1280.8 883.9C1288.8 889.9 1296.8 896.6 1304.8 902.8C1312.8 908.9 1320.8 915.3 1328.8 920.8C1336.8 926.2 1346.9 932.3 1352.8 935.5C1358.7 938.7 1360.4 938.8 1364.0 939.8C1367.6 940.8 1371.2 941.4 1374.5 941.4C1377.8 941.4 1381.0 940.8 1384.0 940.0C1387.0 939.2 1389.6 938.2 1392.5 936.5C1395.4 934.8 1398.5 933.0 1401.6 929.9C1404.7 926.8 1407.8 923.1 1411.0 918.1C1414.2 913.1 1417.7 907.0 1421.1 899.9C1424.5 892.8 1427.8 884.6 1431.2 875.5C1434.6 866.4 1438.3 855.2 1441.4 845.1C1444.5 835.0 1447.0 827.0 1449.7 814.7C1452.4 802.5 1455.5 783.2 1457.8 771.6C1460.1 760.0 1461.5 754.4 1463.4 744.8C1465.3 735.1 1467.1 724.8 1469.0 713.7C1470.9 702.6 1472.8 689.5 1474.6 678.0C1476.4 666.5 1478.4 655.0 1480.1 644.6C1481.8 634.2 1483.5 623.0 1484.6 615.6C1485.7 608.2 1486.2 605.6 1486.8 600.0C1487.4 594.4 1487.9 590.3 1488.4 582.0C1488.9 573.7 1489.2 561.2 1489.6 550.0C1489.9 538.8 1490.1 530.0 1490.5 515.0C1490.9 500.0 1491.3 479.2 1491.8 460.0C1492.2 440.8 1492.8 420.0 1493.2 400.0C1493.7 380.0 1494.1 358.3 1494.5 340.0C1494.9 321.7 1495.4 305.0 1495.8 290.0C1496.2 275.0 1496.8 258.8 1497.0 250.0C1497.2 241.2 1497.2 239.2 1497.3 237.0" stroke="#e41a1c" stroke-width="1.6" fill="none" stroke-linejoin="round"/>
<path d="M1016.5 215V956" stroke="#000" stroke-width="1" fill="none"/>
<path d="M1012 955.4H1497.5" stroke="#000" stroke-width="1.4" fill="none"/>
<path d="M1012 955.4H1017M1012 921.8H1017M1012 888.1H1017M1012 854.5H1017M1012 820.8H1017M1012 787.2H1017M1012 753.6H1017M1012 719.9H1017M1012 686.3H1017M1012 652.6H1017M1012 619.0H1017M1012 585.4H1017M1012 551.7H1017M1012 518.1H1017M1012 484.4H1017M1012 450.8H1017M1012 417.2H1017M1012 383.5H1017M1012 349.9H1017M1012 316.2H1017M1012 282.6H1017M1012 249.0H1017M1012 215.3H1017M1016.5 955V960M1064.6 955V960M1112.7 955V960M1160.8 955V960M1208.9 955V960M1257.0 955V960M1305.2 955V960M1353.3 955V960M1401.4 955V960M1449.5 955V960M1497.6 955V960" stroke="#000" stroke-width="1" fill="none"/>
<g font-family="Liberation Sans,sans-serif" font-size="12px" fill="#1a1a1a" letter-spacing="0">
<text x="1011.5" y="959.4" text-anchor="end">19.5</text>
<text x="1011.5" y="925.8" text-anchor="end">20</text>
<text x="1011.5" y="892.1" text-anchor="end">20.5</text>
<text x="1011.5" y="858.5" text-anchor="end">21</text>
<text x="1011.5" y="824.8" text-anchor="end">21.5</text>
<text x="1011.5" y="791.2" text-anchor="end">22</text>
<text x="1011.5" y="757.6" text-anchor="end">22.5</text>
<text x="1011.5" y="723.9" text-anchor="end">23</text>
<text x="1011.5" y="690.3" text-anchor="end">23.5</text>
<text x="1011.5" y="656.6" text-anchor="end">24</text>
<text x="1011.5" y="623.0" text-anchor="end">24.5</text>
<text x="1011.5" y="589.4" text-anchor="end">25</text>
<text x="1011.5" y="555.7" text-anchor="end">25.5</text>
<text x="1011.5" y="522.1" text-anchor="end">26</text>
<text x="1011.5" y="488.4" text-anchor="end">26.5</text>
<text x="1011.5" y="454.8" text-anchor="end">27</text>
<text x="1011.5" y="421.2" text-anchor="end">27.5</text>
<text x="1011.5" y="387.5" text-anchor="end">28</text>
<text x="1011.5" y="353.9" text-anchor="end">28.5</text>
<text x="1011.5" y="320.2" text-anchor="end">29</text>
<text x="1011.5" y="286.6" text-anchor="end">29.5</text>
<text x="1011.5" y="253.0" text-anchor="end">30</text>
<text x="1011.5" y="219.3" text-anchor="end">30.5</text>
<text x="1016.5" y="970.5" text-anchor="middle">0</text>
<text x="1064.6" y="970.5" text-anchor="middle">1</text>
<text x="1112.7" y="970.5" text-anchor="middle">2</text>
<text x="1160.8" y="970.5" text-anchor="middle">3</text>
<text x="1208.9" y="970.5" text-anchor="middle">4</text>
<text x="1257.0" y="970.5" text-anchor="middle">5</text>
<text x="1305.2" y="970.5" text-anchor="middle">6</text>
<text x="1353.3" y="970.5" text-anchor="middle">7</text>
<text x="1401.4" y="970.5" text-anchor="middle">8</text>
<text x="1449.5" y="970.5" text-anchor="middle">9</text>
<text x="1497.6" y="970.5" text-anchor="middle">10</text>
</g>
<rect x="1360.5" y="215.5" width="137" height="22" fill="#fff" stroke="#000" stroke-width="1"/>
<path d="M1365 226.3H1387" stroke="#e41a1c" stroke-width="1.4"/>
<text x="1390" y="230.5" font-family="Liberation Sans,sans-serif" font-size="13px" fill="#2a2a2a" textLength="102" lengthAdjust="spacingAndGlyphs">solid temperature</text>
</svg>
</body></html>
